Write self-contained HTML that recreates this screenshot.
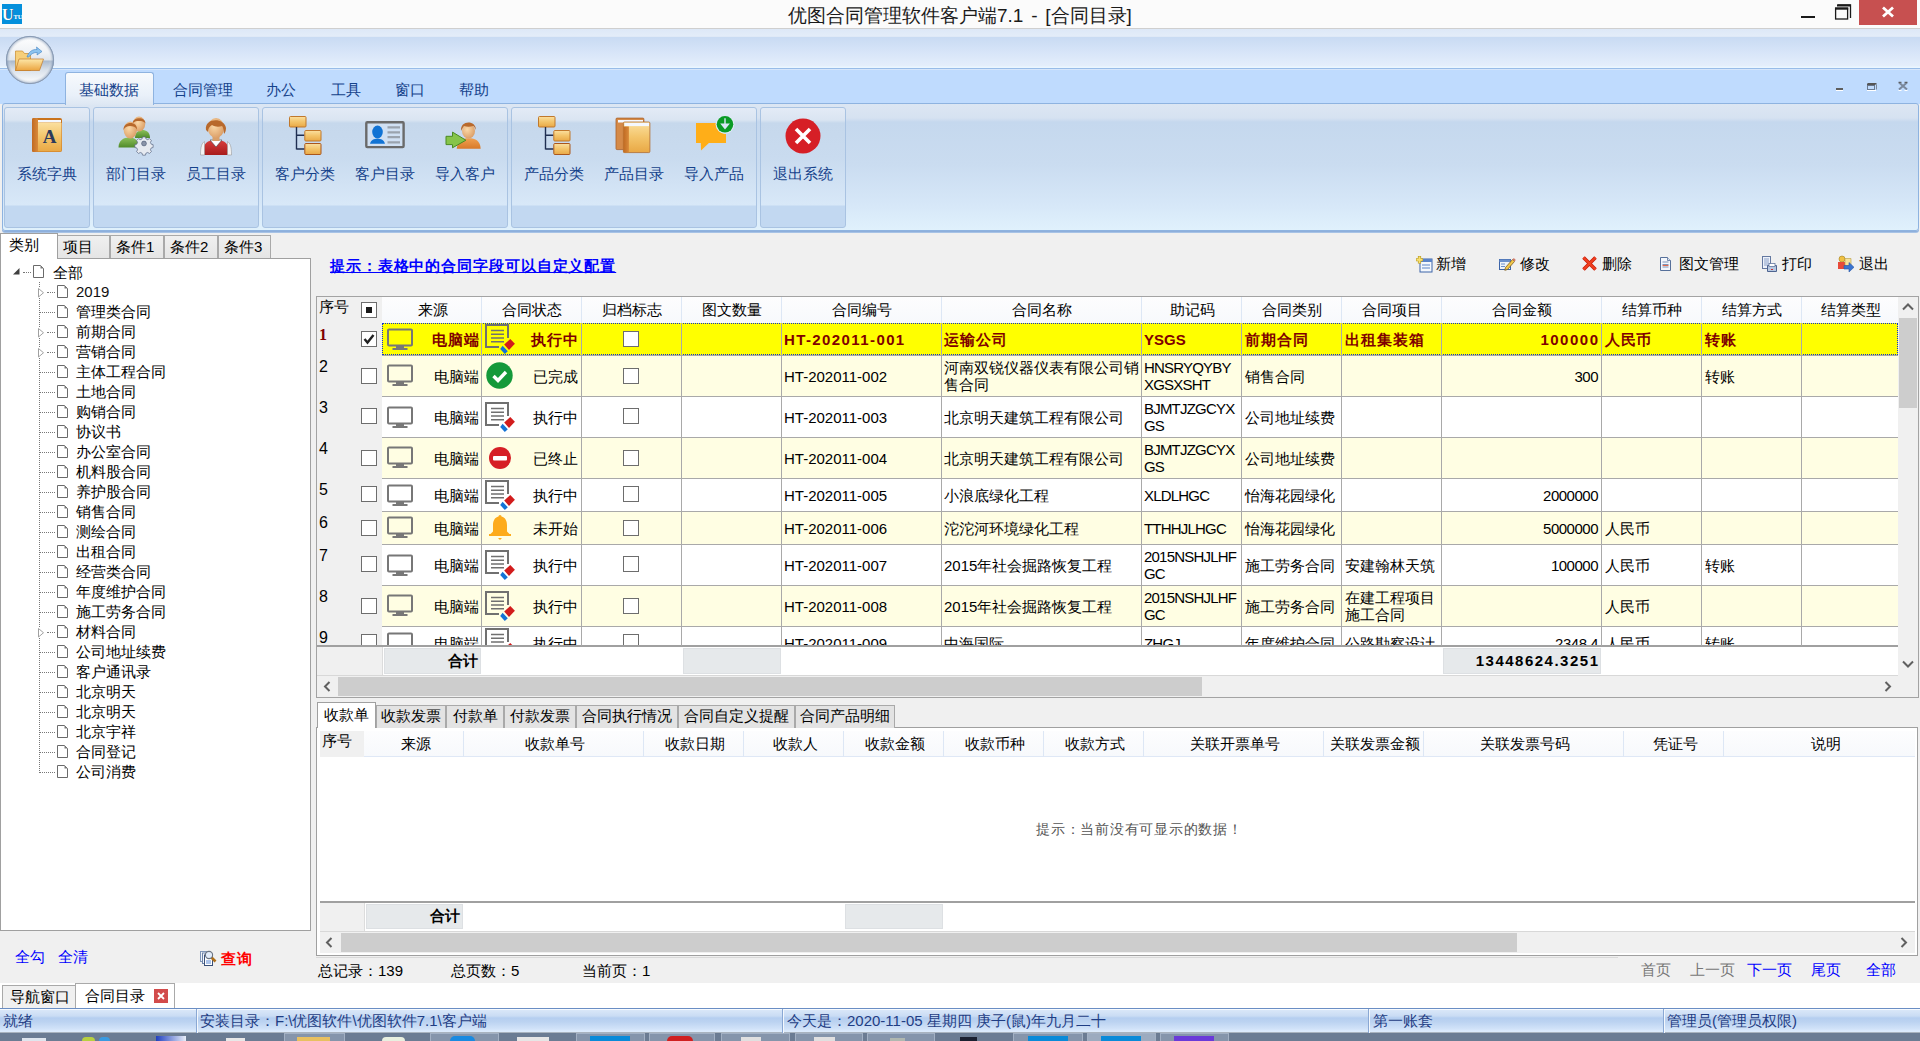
<!DOCTYPE html><html><head><meta charset="utf-8"><style>
*{margin:0;padding:0;box-sizing:border-box;}
html,body{width:1920px;height:1041px;overflow:hidden;}
body{position:relative;background:#f0f0f0;font-family:"Liberation Sans",sans-serif;}
body div,body svg{position:absolute;}
body div{white-space:nowrap;}
.grp{border:1px solid #a9c3e2;border-radius:3px;background:linear-gradient(#e3ebf6 0px,#dae5f2 12px,#c6d8ec 15px,#c9dbef 50px,#d8e8f8 97px,#c2d8f1 98px,#c2d8f1 120px);}
.rl{font-size:15px;line-height:18px;color:#15428b;text-align:center;width:80px;top:165px;}
</style></head><body><div style="left:0px;top:0px;width:1920px;height:29px;background:#fbfbfb;border-bottom:1px solid #cfcfcf;"></div>
<div style="left:2px;top:4px;width:20px;height:20px;background:#0590dc;"></div>
<svg style="left:2px;top:4px" width="20" height="20" viewBox="0 0 20 20"><text x="0.8" y="16.3" font-family="Liberation Serif" font-weight="bold" font-size="16" fill="#0a3050" fill-opacity="0.7">U</text><text x="0" y="15.5" font-family="Liberation Serif" font-weight="bold" font-size="16" fill="#fff">U</text><text x="11.5" y="14.5" font-family="Liberation Serif" font-weight="bold" font-size="6.5" fill="#fff">TU</text></svg>
<div style="left:788px;top:3px;font-size:19px;line-height:26px;height:26px;color:#1a1a1a;word-spacing:2.5px;">优图合同管理软件客户端7.1 - [合同目录]</div>
<div style="left:1801px;top:16px;width:14px;height:2px;background:#1a1a1a;"></div>
<svg style="left:1834px;top:3px" width="18" height="18" viewBox="0 0 18 18"><path d="M3.5 2h13v13" fill="none" stroke="#1a1a1a" stroke-width="1.3"/><rect x="3" y="1.5" width="13.5" height="2" fill="#1a1a1a"/><rect x="1.6" y="5.2" width="12" height="10.8" fill="#fbfbfb" stroke="#1a1a1a" stroke-width="1.3"/><rect x="1" y="4.5" width="13.2" height="2.2" fill="#1a1a1a"/></svg>
<div style="left:1859px;top:0px;width:58px;height:25px;background:#c75050;"></div>
<svg style="left:1881px;top:6px" width="14" height="12" viewBox="0 0 14 12"><path d="M2 1.5L12 10.5M12 1.5L2 10.5" stroke="#fff" stroke-width="2.8"/></svg>
<div style="left:0px;top:29px;width:1920px;height:40px;background:linear-gradient(#dde8f7 0px,#e3ecf9 7px,#dbe6f5 8px,#c9dbf3 8.5px,#d6e4f8 22px,#e4eefb 37px,#eaf6ff 38px,#eaf6ff 39px);border-bottom:1px solid #98bce8;"></div>
<div style="left:0px;top:69px;width:1920px;height:35px;background:linear-gradient(#d6e6fb 0px,#d6e6fb 1px,#bfdbfe 1.5px);"></div>
<div style="left:2px;top:103px;width:1917px;height:128px;border:1px solid #8eb3e0;border-radius:3px;background:linear-gradient(#dce6f3 0px,#d6e2f1 14px,#c5d8ee 18px,#cadcf0 60px,#d6e7f8 100px,#e0f1fc 126px);box-shadow:0 1px 0 #8eafdb,0 2px 0 #a7c3e6;"></div>
<div style="left:65px;top:72px;width:89px;height:33px;border:1px solid #8eb3e0;border-bottom:none;border-radius:3px 3px 0 0;background:linear-gradient(#f7fafd,#e9f0f9 70%,#dde7f3);"></div>
<div style="left:79px;top:80px;font-size:15px;line-height:20px;height:20px;color:#15428b;">基础数据</div>
<div style="left:173px;top:80px;font-size:15px;line-height:20px;height:20px;color:#15428b;">合同管理</div>
<div style="left:266px;top:80px;font-size:15px;line-height:20px;height:20px;color:#15428b;">办公</div>
<div style="left:331px;top:80px;font-size:15px;line-height:20px;height:20px;color:#15428b;">工具</div>
<div style="left:395px;top:80px;font-size:15px;line-height:20px;height:20px;color:#15428b;">窗口</div>
<div style="left:459px;top:80px;font-size:15px;line-height:20px;height:20px;color:#15428b;">帮助</div>
<svg style="left:1830px;top:80px" width="90" height="14" viewBox="0 0 90 14"><path d="M6 10.5h7" stroke="#fff" stroke-width="1"/><path d="M6 9h7" stroke="#5e5e5e" stroke-width="2"/><path d="M37.5 4.5h9v5" fill="none" stroke="#7a889a" stroke-width="1"/><path d="M37.5 3.5h9" stroke="#555" stroke-width="1"/><rect x="37.5" y="5.5" width="7" height="4" fill="none" stroke="#6a7a90" stroke-width="1"/><path d="M37 4.5h8" stroke="#555" stroke-width="1.3"/><path d="M37 10.5h9" stroke="#fff" stroke-width="1"/><path d="M69 2.5L77 9.5M77 2.5L69 9.5" stroke="#7a889c" stroke-width="2"/><path d="M68.5 2.3h3M74.5 2.3h3" stroke="#505050" stroke-width="1"/><path d="M68.5 10.5h3M74.5 10.5h3" stroke="#fff" stroke-width="1"/></svg>
<svg style="left:5px;top:35px" width="50" height="50" viewBox="0 0 50 50"><defs><radialGradient id="orbr" cx="50%" cy="50%" r="50%"><stop offset="0" stop-color="#ffffff" stop-opacity="0"/><stop offset="0.8" stop-color="#ffffff" stop-opacity="0"/><stop offset="0.92" stop-color="#8da0ba" stop-opacity="0.35"/><stop offset="1" stop-color="#7088a8" stop-opacity="0.8"/></radialGradient><linearGradient id="orbh" x1="0" y1="0" x2="0" y2="1"><stop offset="0" stop-color="#ffffff"/><stop offset="0.35" stop-color="#eef1f5"/><stop offset="0.5" stop-color="#dfe5ec"/><stop offset="0.52" stop-color="#a9b9cd"/><stop offset="0.7" stop-color="#d8e0ea"/><stop offset="1" stop-color="#ffffff"/></linearGradient><linearGradient id="fldf" x1="0" y1="0" x2="0" y2="1"><stop offset="0" stop-color="#fde7a8"/><stop offset="1" stop-color="#eba540"/></linearGradient></defs><circle cx="25" cy="25" r="24" fill="url(#orbh)"/><circle cx="25" cy="25" r="24" fill="url(#orbr)"/><circle cx="25" cy="25" r="23.6" fill="none" stroke="#8a9cb6" stroke-width="1"/><path d="M10.5 16h7l2 2.5h6v17H10.5z" fill="#f6cf7a" stroke="#c98a2b" stroke-width="0.7"/><path d="M14 24h24.5l-4 11.5H10.5z" fill="url(#fldf)" stroke="#c0782a" stroke-width="0.7"/><path d="M22 22c1.5-5 5.5-8 10-7.5l-0.5-2.5 5.5 4.5-5 3.5 0.3-2.5c-3.5-0.3-6.5 1.5-8.5 4.5z" fill="#8cc4f0" stroke="#3d7fc2" stroke-width="0.6"/></svg>
<div class="grp" style="left:4px;top:107px;width:86px;height:121px;"></div>
<div class="grp" style="left:93px;top:107px;width:166px;height:121px;"></div>
<div class="grp" style="left:262px;top:107px;width:246px;height:121px;"></div>
<div class="grp" style="left:511px;top:107px;width:246px;height:121px;"></div>
<div class="grp" style="left:760px;top:107px;width:86px;height:121px;"></div>
<svg style="left:25px;top:116px" width="44" height="40" viewBox="0 0 44 40"><defs><linearGradient id="gOr" x1="0" y1="0" x2="0" y2="1"><stop offset="0" stop-color="#fbe0a0"/><stop offset="0.5" stop-color="#f3c46a"/><stop offset="1" stop-color="#e9a845"/></linearGradient><linearGradient id="gSp" x1="0" y1="0" x2="1" y2="0"><stop offset="0" stop-color="#c06a22"/><stop offset="1" stop-color="#d98a3a"/></linearGradient><linearGradient id="gGr" x1="0" y1="0" x2="0" y2="1"><stop offset="0" stop-color="#8cc05a"/><stop offset="1" stop-color="#4f8a2a"/></linearGradient><radialGradient id="gSk" cx="0.4" cy="0.4" r="0.7"><stop offset="0" stop-color="#fbd9a8"/><stop offset="1" stop-color="#d89860"/></radialGradient><linearGradient id="gRd" x1="0" y1="0" x2="0" y2="1"><stop offset="0" stop-color="#d9403e"/><stop offset="1" stop-color="#a81c1c"/></linearGradient><linearGradient id="gOb" x1="0" y1="0" x2="0" y2="1"><stop offset="0" stop-color="#f0a050"/><stop offset="1" stop-color="#d87a2a"/></linearGradient></defs><g transform="translate(4 0)"><rect x="3" y="2" width="30" height="34" rx="2" fill="#c9731c"/><rect x="8" y="4" width="24" height="2.5" fill="#f4f8ff"/><rect x="8" y="6.5" width="24.5" height="29" rx="1" fill="url(#gOr)"/><rect x="3" y="2" width="6" height="34" rx="1.5" fill="url(#gSp)"/><text x="20.5" y="27" font-family="Liberation Serif" font-weight="bold" font-size="19" fill="#2b3a5c" text-anchor="middle">A</text></g></svg>
<div class="rl" style="left:7px;">系统字典</div>
<svg style="left:114px;top:116px" width="44" height="40" viewBox="0 0 44 40"><g transform="translate(4 0)"><path d="M17 22c0-6 4-8 7.5-8s7.5 2 7.5 8z" fill="url(#gGr)"/><ellipse cx="21" cy="8" rx="6.2" ry="7.5" fill="url(#gSk)"/><path d="M14.5 8c-0.5-7 13-8 13-0.5c-1.5-2-3.5-2.5-6.5-2.5s-5 0.5-6.5 3z" fill="#b8692c"/><path d="M0.5 31.5c0-7 5-10 10.5-10s10.5 3 10.5 10z" fill="url(#gGr)"/><ellipse cx="12.3" cy="14" rx="6.6" ry="8.6" fill="url(#gSk)"/><path d="M5.5 14c-0.5-9 14-9.5 13.5-0.5c-1.5-3-4-3.5-7-3.5s-5 1-6.5 4z" fill="#b8692c"/><g transform="translate(26 27.5) scale(0.8)"><path d="M-1.8-8.2h3.6l0.6 2.4 2.3 1 2.1-1.3 2.5 2.5-1.3 2.1 1 2.3 2.4 0.6v3.6l-2.4 0.6-1 2.3 1.3 2.1-2.5 2.5-2.1-1.3-2.3 1-0.6 2.4h-3.6l-0.6-2.4-2.3-1-2.1 1.3-2.5-2.5 1.3-2.1-1-2.3-2.4-0.6v-3.6l2.4-0.6 1-2.3-1.3-2.1 2.5-2.5 2.1 1.3 2.3-1z" fill="#e6eaf0" stroke="#5d6a85" stroke-width="0.9"/><circle r="3" fill="#8a94a8" stroke="#4d5a75" stroke-width="0.8"/></g></g></svg>
<div class="rl" style="left:96px;">部门目录</div>
<svg style="left:194px;top:116px" width="44" height="40" viewBox="0 0 44 40"><g transform="translate(4 0)"><path d="M4.5 39c0-12 5-15 13.5-15s13.5 3 13.5 15z" fill="url(#gRd)"/><path d="M2.5 39c0-9 1.5-12 4-13.5v13.5z M33.5 39c0-9-1.5-12-4-13.5v13.5z" fill="#f3f3f3" stroke="#9a9a9a" stroke-width="0.6"/><path d="M12 24l6 7 6-7z" fill="#fff" stroke="#444" stroke-width="0.6"/><rect x="14.5" y="19" width="7" height="6" fill="#d9a06a"/><ellipse cx="18" cy="12" rx="8.2" ry="10" fill="url(#gSk)"/><path d="M8 14c-2-12 18-13 20-2c0 3-1 5-2 6c0-4-1-7-2-8c-3 1-7 1-10-1c-2 1-4 3-4 7z" fill="#b8692c"/></g></svg>
<div class="rl" style="left:176px;">员工目录</div>
<svg style="left:283px;top:116px" width="44" height="40" viewBox="0 0 44 40"><g transform="translate(4 0)"><rect x="2.5" y="0.5" width="16.5" height="10.5" rx="1" fill="url(#gOr)" stroke="#c0782c"/><path d="M9.5 11v22.5M9.5 19.3h8M9.5 33h8" stroke="#1f2f52" stroke-width="1.4" fill="none"/><rect x="17.8" y="14.5" width="16.2" height="10.5" rx="1" fill="url(#gOr)" stroke="#c0782c"/><rect x="17.8" y="27.5" width="16.2" height="11" rx="1" fill="url(#gOr)" stroke="#a9561c"/></g></svg>
<div class="rl" style="left:265px;">客户分类</div>
<svg style="left:363px;top:116px" width="44" height="40" viewBox="0 0 44 40"><g transform="translate(0 0)"><rect x="3.3" y="6.3" width="37.3" height="24.8" rx="1" fill="#d0e0f3" stroke="#6a6a6a" stroke-width="2.4"/><ellipse cx="14.5" cy="16" rx="5.3" ry="6.5" fill="#1173d4"/><path d="M7 27.7c1-4 4-5 7.5-5s6.5 1 7.5 5z" fill="#1173d4"/><path d="M24.5 11.3h12.5M24.5 16.4h12.5M24.5 21.2h12.5M24.5 26.3h12.5" stroke="#9aa3ae" stroke-width="2.2"/></g></svg>
<div class="rl" style="left:345px;">客户目录</div>
<svg style="left:443px;top:116px" width="44" height="40" viewBox="0 0 44 40"><g transform="translate(0 0)"><path d="M13.7 32.7c1-8 5-10.5 12-10.5s11.5 2.5 12 10.5z" fill="url(#gOb)"/><ellipse cx="25.5" cy="15" rx="6.5" ry="7.5" fill="url(#gSk)"/><path d="M18 15c-1-11 15-11 15-1c-1-2-2-4-3-4c-3 1-6 1-9 0c-1 1-2 3-3 5z" fill="#b8692c"/><path d="M3 20.3h6.5v-4.2l13.4 8.1-13.4 7.6v-3.2H3z" fill="#86c44a" stroke="#4a8a22" stroke-width="1"/></g></svg>
<div class="rl" style="left:425px;">导入客户</div>
<svg style="left:532px;top:116px" width="44" height="40" viewBox="0 0 44 40"><g transform="translate(4 0)"><rect x="2.5" y="0.5" width="16.5" height="10.5" rx="1" fill="url(#gOr)" stroke="#c0782c"/><path d="M9.5 11v22.5M9.5 19.3h8M9.5 33h8" stroke="#1f2f52" stroke-width="1.4" fill="none"/><rect x="17.8" y="14.5" width="16.2" height="10.5" rx="1" fill="url(#gOr)" stroke="#c0782c"/><rect x="17.8" y="27.5" width="16.2" height="11" rx="1" fill="url(#gOr)" stroke="#a9561c"/></g></svg>
<div class="rl" style="left:514px;">产品分类</div>
<svg style="left:612px;top:116px" width="44" height="40" viewBox="0 0 44 40"><g transform="translate(0 0)"><rect x="4" y="2.1" width="27.9" height="31.5" rx="1" fill="#d58a48" stroke="#a9612a" stroke-width="0.8"/><rect x="6" y="4" width="25" height="2.5" fill="#f4f8ff"/><rect x="11.4" y="6" width="26.5" height="30.6" rx="1.2" fill="url(#gOr)" stroke="#b06a2e" stroke-width="0.8"/><rect x="12.5" y="6.9" width="24.5" height="3.2" fill="#f4f8ff"/><rect x="11.4" y="10.5" width="5.5" height="26" fill="url(#gSp)"/></g></svg>
<div class="rl" style="left:594px;">产品目录</div>
<svg style="left:692px;top:116px" width="44" height="40" viewBox="0 0 44 40"><g transform="translate(0 0)"><path d="M4 6.9h20c0.5 5 3 8 5 9.5c1.5 1 3 1.2 5 1.5v9.1H16.9L9 34.6 8.8 27H4z" fill="#ffae18"/><circle cx="33" cy="8.3" r="9.4" fill="#dfeaf6"/><circle cx="33" cy="8.3" r="8.3" fill="#0a9b25"/><path d="M32.3 2.3h1.4v5.1h4.2L33 13.4 28.2 7.4h4.1z" fill="#d8e6f6"/></g></svg>
<div class="rl" style="left:674px;">导入产品</div>
<svg style="left:781px;top:116px" width="44" height="40" viewBox="0 0 44 40"><g transform="translate(0 0)"><circle cx="22" cy="20" r="17.5" fill="#d61f26"/><path d="M15 13L29 27M29 13L15 27" stroke="#fff" stroke-width="3.6"/></g></svg>
<div class="rl" style="left:763px;">退出系统</div>
<div style="left:0px;top:233px;width:58px;height:26px;background:#fff;border:1px solid #a0a0a0;border-bottom:none;z-index:2;"></div>
<div style="left:9px;top:236px;font-size:15px;line-height:18px;height:18px;color:#000;z-index:3;">类别</div>
<div style="left:57px;top:235px;width:53px;height:24px;background:linear-gradient(#f0f0f0,#e4e4e4);border:1px solid #a9a9a9;border-bottom:none;"></div>
<div style="left:63px;top:238px;font-size:15px;line-height:18px;height:18px;color:#000;">项目</div>
<div style="left:110px;top:235px;width:54px;height:24px;background:linear-gradient(#f0f0f0,#e4e4e4);border:1px solid #a9a9a9;border-bottom:none;"></div>
<div style="left:116px;top:238px;font-size:15px;line-height:18px;height:18px;color:#000;">条件1</div>
<div style="left:164px;top:235px;width:54px;height:24px;background:linear-gradient(#f0f0f0,#e4e4e4);border:1px solid #a9a9a9;border-bottom:none;"></div>
<div style="left:170px;top:238px;font-size:15px;line-height:18px;height:18px;color:#000;">条件2</div>
<div style="left:218px;top:235px;width:53px;height:24px;background:linear-gradient(#f0f0f0,#e4e4e4);border:1px solid #a9a9a9;border-bottom:none;"></div>
<div style="left:224px;top:238px;font-size:15px;line-height:18px;height:18px;color:#000;">条件3</div>
<div style="left:0px;top:258px;width:311px;height:673px;background:#fff;border:1px solid #a0a0a0;"></div>
<svg style="left:13px;top:268px" width="7" height="7" viewBox="0 0 7 7"><path d="M6.5 0V6.5H0z" fill="#404040"/></svg>
<div style="left:23px;top:272px;width:8px;height:1px;border-top:1px dotted #777;"></div>
<svg style="left:33px;top:265px" width="12" height="14" viewBox="0 0 12 14"><path d="M0.5 0.5H7.5L10.5 3.5V12.5H0.5Z" fill="#fff" stroke="#6a6a6a"/><path d="M7.5 0.5L10.5 3.5H7.5Z" fill="#7a7a7a"/></svg>
<div style="left:53px;top:263.5px;font-size:15px;line-height:18px;height:18px;color:#000;">全部</div>
<div style="left:39px;top:282px;width:1px;height:491px;border-left:1px dotted #777;"></div>
<div style="left:38px;top:287px;width:6px;height:10px;background:#fff;"></div>
<svg style="left:38px;top:288px" width="6" height="10" viewBox="0 0 6 10"><path d="M0.5 0.5L5.5 4.75L0.5 9z" fill="#fff" stroke="#a0a0a0"/></svg>
<div style="left:47px;top:292px;width:8px;height:1px;border-top:1px dotted #777;"></div>
<svg style="left:57px;top:285px" width="12" height="14" viewBox="0 0 12 14"><path d="M0.5 0.5H7.5L10.5 3.5V12.5H0.5Z" fill="#fff" stroke="#6a6a6a"/><path d="M7.5 0.5L10.5 3.5H7.5Z" fill="#7a7a7a"/></svg>
<div style="left:76px;top:283px;font-size:15px;line-height:18px;height:18px;color:#111;">2019</div>
<div style="left:40px;top:312px;width:15px;height:1px;border-top:1px dotted #777;"></div>
<svg style="left:57px;top:305px" width="12" height="14" viewBox="0 0 12 14"><path d="M0.5 0.5H7.5L10.5 3.5V12.5H0.5Z" fill="#fff" stroke="#6a6a6a"/><path d="M7.5 0.5L10.5 3.5H7.5Z" fill="#7a7a7a"/></svg>
<div style="left:76px;top:303px;font-size:15px;line-height:18px;height:18px;color:#000;">管理类合同</div>
<div style="left:38px;top:327px;width:6px;height:10px;background:#fff;"></div>
<svg style="left:38px;top:328px" width="6" height="10" viewBox="0 0 6 10"><path d="M0.5 0.5L5.5 4.75L0.5 9z" fill="#fff" stroke="#a0a0a0"/></svg>
<div style="left:47px;top:332px;width:8px;height:1px;border-top:1px dotted #777;"></div>
<svg style="left:57px;top:325px" width="12" height="14" viewBox="0 0 12 14"><path d="M0.5 0.5H7.5L10.5 3.5V12.5H0.5Z" fill="#fff" stroke="#6a6a6a"/><path d="M7.5 0.5L10.5 3.5H7.5Z" fill="#7a7a7a"/></svg>
<div style="left:76px;top:323px;font-size:15px;line-height:18px;height:18px;color:#000;">前期合同</div>
<div style="left:38px;top:347px;width:6px;height:10px;background:#fff;"></div>
<svg style="left:38px;top:348px" width="6" height="10" viewBox="0 0 6 10"><path d="M0.5 0.5L5.5 4.75L0.5 9z" fill="#fff" stroke="#a0a0a0"/></svg>
<div style="left:47px;top:352px;width:8px;height:1px;border-top:1px dotted #777;"></div>
<svg style="left:57px;top:345px" width="12" height="14" viewBox="0 0 12 14"><path d="M0.5 0.5H7.5L10.5 3.5V12.5H0.5Z" fill="#fff" stroke="#6a6a6a"/><path d="M7.5 0.5L10.5 3.5H7.5Z" fill="#7a7a7a"/></svg>
<div style="left:76px;top:343px;font-size:15px;line-height:18px;height:18px;color:#000;">营销合同</div>
<div style="left:40px;top:372px;width:15px;height:1px;border-top:1px dotted #777;"></div>
<svg style="left:57px;top:365px" width="12" height="14" viewBox="0 0 12 14"><path d="M0.5 0.5H7.5L10.5 3.5V12.5H0.5Z" fill="#fff" stroke="#6a6a6a"/><path d="M7.5 0.5L10.5 3.5H7.5Z" fill="#7a7a7a"/></svg>
<div style="left:76px;top:363px;font-size:15px;line-height:18px;height:18px;color:#000;">主体工程合同</div>
<div style="left:40px;top:392px;width:15px;height:1px;border-top:1px dotted #777;"></div>
<svg style="left:57px;top:385px" width="12" height="14" viewBox="0 0 12 14"><path d="M0.5 0.5H7.5L10.5 3.5V12.5H0.5Z" fill="#fff" stroke="#6a6a6a"/><path d="M7.5 0.5L10.5 3.5H7.5Z" fill="#7a7a7a"/></svg>
<div style="left:76px;top:383px;font-size:15px;line-height:18px;height:18px;color:#000;">土地合同</div>
<div style="left:40px;top:412px;width:15px;height:1px;border-top:1px dotted #777;"></div>
<svg style="left:57px;top:405px" width="12" height="14" viewBox="0 0 12 14"><path d="M0.5 0.5H7.5L10.5 3.5V12.5H0.5Z" fill="#fff" stroke="#6a6a6a"/><path d="M7.5 0.5L10.5 3.5H7.5Z" fill="#7a7a7a"/></svg>
<div style="left:76px;top:403px;font-size:15px;line-height:18px;height:18px;color:#000;">购销合同</div>
<div style="left:40px;top:432px;width:15px;height:1px;border-top:1px dotted #777;"></div>
<svg style="left:57px;top:425px" width="12" height="14" viewBox="0 0 12 14"><path d="M0.5 0.5H7.5L10.5 3.5V12.5H0.5Z" fill="#fff" stroke="#6a6a6a"/><path d="M7.5 0.5L10.5 3.5H7.5Z" fill="#7a7a7a"/></svg>
<div style="left:76px;top:423px;font-size:15px;line-height:18px;height:18px;color:#000;">协议书</div>
<div style="left:40px;top:452px;width:15px;height:1px;border-top:1px dotted #777;"></div>
<svg style="left:57px;top:445px" width="12" height="14" viewBox="0 0 12 14"><path d="M0.5 0.5H7.5L10.5 3.5V12.5H0.5Z" fill="#fff" stroke="#6a6a6a"/><path d="M7.5 0.5L10.5 3.5H7.5Z" fill="#7a7a7a"/></svg>
<div style="left:76px;top:443px;font-size:15px;line-height:18px;height:18px;color:#000;">办公室合同</div>
<div style="left:40px;top:472px;width:15px;height:1px;border-top:1px dotted #777;"></div>
<svg style="left:57px;top:465px" width="12" height="14" viewBox="0 0 12 14"><path d="M0.5 0.5H7.5L10.5 3.5V12.5H0.5Z" fill="#fff" stroke="#6a6a6a"/><path d="M7.5 0.5L10.5 3.5H7.5Z" fill="#7a7a7a"/></svg>
<div style="left:76px;top:463px;font-size:15px;line-height:18px;height:18px;color:#000;">机料股合同</div>
<div style="left:40px;top:492px;width:15px;height:1px;border-top:1px dotted #777;"></div>
<svg style="left:57px;top:485px" width="12" height="14" viewBox="0 0 12 14"><path d="M0.5 0.5H7.5L10.5 3.5V12.5H0.5Z" fill="#fff" stroke="#6a6a6a"/><path d="M7.5 0.5L10.5 3.5H7.5Z" fill="#7a7a7a"/></svg>
<div style="left:76px;top:483px;font-size:15px;line-height:18px;height:18px;color:#000;">养护股合同</div>
<div style="left:40px;top:512px;width:15px;height:1px;border-top:1px dotted #777;"></div>
<svg style="left:57px;top:505px" width="12" height="14" viewBox="0 0 12 14"><path d="M0.5 0.5H7.5L10.5 3.5V12.5H0.5Z" fill="#fff" stroke="#6a6a6a"/><path d="M7.5 0.5L10.5 3.5H7.5Z" fill="#7a7a7a"/></svg>
<div style="left:76px;top:503px;font-size:15px;line-height:18px;height:18px;color:#000;">销售合同</div>
<div style="left:40px;top:532px;width:15px;height:1px;border-top:1px dotted #777;"></div>
<svg style="left:57px;top:525px" width="12" height="14" viewBox="0 0 12 14"><path d="M0.5 0.5H7.5L10.5 3.5V12.5H0.5Z" fill="#fff" stroke="#6a6a6a"/><path d="M7.5 0.5L10.5 3.5H7.5Z" fill="#7a7a7a"/></svg>
<div style="left:76px;top:523px;font-size:15px;line-height:18px;height:18px;color:#000;">测绘合同</div>
<div style="left:40px;top:552px;width:15px;height:1px;border-top:1px dotted #777;"></div>
<svg style="left:57px;top:545px" width="12" height="14" viewBox="0 0 12 14"><path d="M0.5 0.5H7.5L10.5 3.5V12.5H0.5Z" fill="#fff" stroke="#6a6a6a"/><path d="M7.5 0.5L10.5 3.5H7.5Z" fill="#7a7a7a"/></svg>
<div style="left:76px;top:543px;font-size:15px;line-height:18px;height:18px;color:#000;">出租合同</div>
<div style="left:40px;top:572px;width:15px;height:1px;border-top:1px dotted #777;"></div>
<svg style="left:57px;top:565px" width="12" height="14" viewBox="0 0 12 14"><path d="M0.5 0.5H7.5L10.5 3.5V12.5H0.5Z" fill="#fff" stroke="#6a6a6a"/><path d="M7.5 0.5L10.5 3.5H7.5Z" fill="#7a7a7a"/></svg>
<div style="left:76px;top:563px;font-size:15px;line-height:18px;height:18px;color:#000;">经营类合同</div>
<div style="left:40px;top:592px;width:15px;height:1px;border-top:1px dotted #777;"></div>
<svg style="left:57px;top:585px" width="12" height="14" viewBox="0 0 12 14"><path d="M0.5 0.5H7.5L10.5 3.5V12.5H0.5Z" fill="#fff" stroke="#6a6a6a"/><path d="M7.5 0.5L10.5 3.5H7.5Z" fill="#7a7a7a"/></svg>
<div style="left:76px;top:583px;font-size:15px;line-height:18px;height:18px;color:#000;">年度维护合同</div>
<div style="left:40px;top:612px;width:15px;height:1px;border-top:1px dotted #777;"></div>
<svg style="left:57px;top:605px" width="12" height="14" viewBox="0 0 12 14"><path d="M0.5 0.5H7.5L10.5 3.5V12.5H0.5Z" fill="#fff" stroke="#6a6a6a"/><path d="M7.5 0.5L10.5 3.5H7.5Z" fill="#7a7a7a"/></svg>
<div style="left:76px;top:603px;font-size:15px;line-height:18px;height:18px;color:#000;">施工劳务合同</div>
<div style="left:38px;top:627px;width:6px;height:10px;background:#fff;"></div>
<svg style="left:38px;top:628px" width="6" height="10" viewBox="0 0 6 10"><path d="M0.5 0.5L5.5 4.75L0.5 9z" fill="#fff" stroke="#a0a0a0"/></svg>
<div style="left:47px;top:632px;width:8px;height:1px;border-top:1px dotted #777;"></div>
<svg style="left:57px;top:625px" width="12" height="14" viewBox="0 0 12 14"><path d="M0.5 0.5H7.5L10.5 3.5V12.5H0.5Z" fill="#fff" stroke="#6a6a6a"/><path d="M7.5 0.5L10.5 3.5H7.5Z" fill="#7a7a7a"/></svg>
<div style="left:76px;top:623px;font-size:15px;line-height:18px;height:18px;color:#000;">材料合同</div>
<div style="left:40px;top:652px;width:15px;height:1px;border-top:1px dotted #777;"></div>
<svg style="left:57px;top:645px" width="12" height="14" viewBox="0 0 12 14"><path d="M0.5 0.5H7.5L10.5 3.5V12.5H0.5Z" fill="#fff" stroke="#6a6a6a"/><path d="M7.5 0.5L10.5 3.5H7.5Z" fill="#7a7a7a"/></svg>
<div style="left:76px;top:643px;font-size:15px;line-height:18px;height:18px;color:#000;">公司地址续费</div>
<div style="left:40px;top:672px;width:15px;height:1px;border-top:1px dotted #777;"></div>
<svg style="left:57px;top:665px" width="12" height="14" viewBox="0 0 12 14"><path d="M0.5 0.5H7.5L10.5 3.5V12.5H0.5Z" fill="#fff" stroke="#6a6a6a"/><path d="M7.5 0.5L10.5 3.5H7.5Z" fill="#7a7a7a"/></svg>
<div style="left:76px;top:663px;font-size:15px;line-height:18px;height:18px;color:#000;">客户通讯录</div>
<div style="left:40px;top:692px;width:15px;height:1px;border-top:1px dotted #777;"></div>
<svg style="left:57px;top:685px" width="12" height="14" viewBox="0 0 12 14"><path d="M0.5 0.5H7.5L10.5 3.5V12.5H0.5Z" fill="#fff" stroke="#6a6a6a"/><path d="M7.5 0.5L10.5 3.5H7.5Z" fill="#7a7a7a"/></svg>
<div style="left:76px;top:683px;font-size:15px;line-height:18px;height:18px;color:#000;">北京明天</div>
<div style="left:40px;top:712px;width:15px;height:1px;border-top:1px dotted #777;"></div>
<svg style="left:57px;top:705px" width="12" height="14" viewBox="0 0 12 14"><path d="M0.5 0.5H7.5L10.5 3.5V12.5H0.5Z" fill="#fff" stroke="#6a6a6a"/><path d="M7.5 0.5L10.5 3.5H7.5Z" fill="#7a7a7a"/></svg>
<div style="left:76px;top:703px;font-size:15px;line-height:18px;height:18px;color:#000;">北京明天</div>
<div style="left:40px;top:732px;width:15px;height:1px;border-top:1px dotted #777;"></div>
<svg style="left:57px;top:725px" width="12" height="14" viewBox="0 0 12 14"><path d="M0.5 0.5H7.5L10.5 3.5V12.5H0.5Z" fill="#fff" stroke="#6a6a6a"/><path d="M7.5 0.5L10.5 3.5H7.5Z" fill="#7a7a7a"/></svg>
<div style="left:76px;top:723px;font-size:15px;line-height:18px;height:18px;color:#000;">北京宇祥</div>
<div style="left:40px;top:752px;width:15px;height:1px;border-top:1px dotted #777;"></div>
<svg style="left:57px;top:745px" width="12" height="14" viewBox="0 0 12 14"><path d="M0.5 0.5H7.5L10.5 3.5V12.5H0.5Z" fill="#fff" stroke="#6a6a6a"/><path d="M7.5 0.5L10.5 3.5H7.5Z" fill="#7a7a7a"/></svg>
<div style="left:76px;top:743px;font-size:15px;line-height:18px;height:18px;color:#000;">合同登记</div>
<div style="left:40px;top:772px;width:15px;height:1px;border-top:1px dotted #777;"></div>
<svg style="left:57px;top:765px" width="12" height="14" viewBox="0 0 12 14"><path d="M0.5 0.5H7.5L10.5 3.5V12.5H0.5Z" fill="#fff" stroke="#6a6a6a"/><path d="M7.5 0.5L10.5 3.5H7.5Z" fill="#7a7a7a"/></svg>
<div style="left:76px;top:763px;font-size:15px;line-height:18px;height:18px;color:#000;">公司消费</div>
<div style="left:15px;top:948px;font-size:15px;line-height:18px;height:18px;color:#0000ff;">全勾</div>
<div style="left:58px;top:948px;font-size:15px;line-height:18px;height:18px;color:#0000ff;">全清</div>
<svg style="left:199px;top:950px" width="18" height="17" viewBox="0 0 18 17"><rect x="1.5" y="1.5" width="6" height="10" fill="#f0f4fa" stroke="#8096b8"/><rect x="3.5" y="3" width="6" height="10.5" fill="#f4f7fc" stroke="#6d84aa"/><rect x="5.5" y="5" width="8" height="10.5" fill="#fff" stroke="#3a5078"/><path d="M7 11h5M7 13h5" stroke="#5a8ad8" stroke-width="1"/><path d="M12.5 7.5L16.5 11.5" stroke="#b0701a" stroke-width="2.6"/><circle cx="10" cy="5" r="3.6" fill="#e2ecfa" stroke="#6a7380" stroke-width="1.1"/></svg>
<div style="left:221px;top:949.5px;font-size:15px;line-height:18px;height:18px;color:#ff0000;font-weight:bold;letter-spacing:1px;">查询</div>
<div style="left:330px;top:257px;font-size:15px;line-height:18px;height:20px;color:#0000ff;font-weight:bold;text-decoration:underline;letter-spacing:0.9px;">提示：表格中的合同字段可以自定义配置</div>
<svg style="left:1415px;top:255px" width="18" height="18" viewBox="0 0 18 18"><rect x="5" y="4" width="12" height="13" fill="#f4f8fd" stroke="#3c64a8"/><rect x="5" y="4" width="12" height="3" fill="#5b84c8"/><path d="M7 10h8M7 13h8" stroke="#5b84c8" stroke-width="1.2"/><path d="M4.5 1v7.5M1 4.75h7" stroke="#b89a20" stroke-width="3.2"/><path d="M4.5 1.5v6.5M1.5 4.75h6" stroke="#f8e070" stroke-width="1.8"/></svg>
<div style="left:1436px;top:255px;font-size:15px;line-height:18px;height:18px;color:#000;">新增</div>
<svg style="left:1498px;top:255px" width="18" height="18" viewBox="0 0 18 18"><rect x="1.5" y="4.5" width="11" height="10" fill="#eef3fa" stroke="#3c64a8"/><rect x="1.5" y="4.5" width="11" height="2.5" fill="#6a90cc"/><path d="M3 9h4M3 11.5h4" stroke="#6a90cc"/><path d="M7.5 12.5l7-8 2 2-7 8-2.7 0.8z" fill="#f2c84a" stroke="#7a5a20" stroke-width="0.8"/><path d="M14.5 4.5l1.3-1.5 2 2-1.3 1.5z" fill="#d07a6a"/></svg>
<div style="left:1520px;top:255px;font-size:15px;line-height:18px;height:18px;color:#000;">修改</div>
<svg style="left:1581px;top:255px" width="18" height="18" viewBox="0 0 18 18"><path d="M2.5 2.5L14.5 14.5M14.5 2.5L2.5 14.5" stroke="#c81e0a" stroke-width="3.6"/><path d="M2.5 2.5L14.5 14.5M14.5 2.5L2.5 14.5" stroke="#f04020" stroke-width="2"/></svg>
<div style="left:1602px;top:255px;font-size:15px;line-height:18px;height:18px;color:#000;">删除</div>
<svg style="left:1659px;top:255px" width="18" height="18" viewBox="0 0 18 18"><path d="M1.5 2.5h7l3 3v10h-10z" fill="#f4f7fc" stroke="#56709a"/><path d="M8.5 2.5v3h3" fill="#dde6f2" stroke="#56709a" stroke-width="0.8"/><path d="M3.5 7h6M3.5 9.5h6M3.5 12h6" stroke="#7d93b8" stroke-width="1"/><path d="M3.5 10.5h6" stroke="#e05a3a" stroke-width="0.9"/></svg>
<div style="left:1679px;top:255px;font-size:15px;line-height:18px;height:18px;color:#000;">图文管理</div>
<svg style="left:1761px;top:255px" width="18" height="18" viewBox="0 0 18 18"><rect x="1.5" y="1.5" width="8" height="12" fill="#eef2fa" stroke="#6478a0"/><path d="M3 4h5M3 6h5M3 8h5M3 10h5" stroke="#8aa0c8" stroke-width="1"/><path d="M6.5 10.5h9v6h-9z" fill="#b8c8e0" stroke="#4e6490"/><rect x="8" y="8.5" width="6" height="3" fill="#fff" stroke="#6478a0" stroke-width="0.8"/><rect x="10" y="14" width="2" height="1" fill="#d03030"/></svg>
<div style="left:1782px;top:255px;font-size:15px;line-height:18px;height:18px;color:#000;">打印</div>
<svg style="left:1837px;top:255px" width="18" height="18" viewBox="0 0 18 18"><circle cx="5" cy="4" r="3" fill="#f0c040" stroke="#a08020" stroke-width="0.6"/><rect x="1" y="7" width="8" height="7" fill="#e84a3a"/><path d="M8 3.5h6v7H8z" fill="#f6e29a" stroke="#b89a40" stroke-width="0.6"/><path d="M7 10.5h5v-3l5 4.75-5 4.75v-3H7z" fill="#3a74d0" stroke="#2a58a8" stroke-width="0.6"/></svg>
<div style="left:1859px;top:255px;font-size:15px;line-height:18px;height:18px;color:#000;">退出</div>
<div style="left:316px;top:296px;width:1603px;height:402px;background:#fff;border:1px solid #a3a3a3;"></div>
<div style="left:317px;top:297px;width:65px;height:349px;background:#f0f0f0;"></div>
<div style="left:382px;top:297px;width:1516px;height:26px;background:linear-gradient(#fdfdfe,#f7f9fc);"></div>
<div style="left:383px;top:301px;font-size:15px;line-height:18px;height:18px;color:#000;width:99px;text-align:center;">来源</div>
<div style="left:481px;top:297px;width:1px;height:26px;background:#dde7f5;"></div>
<div style="left:482px;top:301px;font-size:15px;line-height:18px;height:18px;color:#000;width:100px;text-align:center;">合同状态</div>
<div style="left:581px;top:297px;width:1px;height:26px;background:#dde7f5;"></div>
<div style="left:582px;top:301px;font-size:15px;line-height:18px;height:18px;color:#000;width:100px;text-align:center;">归档标志</div>
<div style="left:681px;top:297px;width:1px;height:26px;background:#dde7f5;"></div>
<div style="left:682px;top:301px;font-size:15px;line-height:18px;height:18px;color:#000;width:100px;text-align:center;">图文数量</div>
<div style="left:781px;top:297px;width:1px;height:26px;background:#dde7f5;"></div>
<div style="left:782px;top:301px;font-size:15px;line-height:18px;height:18px;color:#000;width:160px;text-align:center;">合同编号</div>
<div style="left:941px;top:297px;width:1px;height:26px;background:#dde7f5;"></div>
<div style="left:942px;top:301px;font-size:15px;line-height:18px;height:18px;color:#000;width:200px;text-align:center;">合同名称</div>
<div style="left:1141px;top:297px;width:1px;height:26px;background:#dde7f5;"></div>
<div style="left:1142px;top:301px;font-size:15px;line-height:18px;height:18px;color:#000;width:100px;text-align:center;">助记码</div>
<div style="left:1241px;top:297px;width:1px;height:26px;background:#dde7f5;"></div>
<div style="left:1242px;top:301px;font-size:15px;line-height:18px;height:18px;color:#000;width:100px;text-align:center;">合同类别</div>
<div style="left:1341px;top:297px;width:1px;height:26px;background:#dde7f5;"></div>
<div style="left:1342px;top:301px;font-size:15px;line-height:18px;height:18px;color:#000;width:100px;text-align:center;">合同项目</div>
<div style="left:1441px;top:297px;width:1px;height:26px;background:#dde7f5;"></div>
<div style="left:1442px;top:301px;font-size:15px;line-height:18px;height:18px;color:#000;width:160px;text-align:center;">合同金额</div>
<div style="left:1601px;top:297px;width:1px;height:26px;background:#dde7f5;"></div>
<div style="left:1602px;top:301px;font-size:15px;line-height:18px;height:18px;color:#000;width:100px;text-align:center;">结算币种</div>
<div style="left:1701px;top:297px;width:1px;height:26px;background:#dde7f5;"></div>
<div style="left:1702px;top:301px;font-size:15px;line-height:18px;height:18px;color:#000;width:100px;text-align:center;">结算方式</div>
<div style="left:1801px;top:297px;width:1px;height:26px;background:#dde7f5;"></div>
<div style="left:1802px;top:301px;font-size:15px;line-height:18px;height:18px;color:#000;width:97px;text-align:center;">结算类型</div>
<div style="left:319px;top:298px;font-size:15px;line-height:18px;height:18px;color:#000;">序号</div>
<div style="left:361px;top:302px;width:16px;height:16px;background:#fff;border:1px solid #6d6d6d;"></div>
<div style="left:366px;top:307px;width:6px;height:6px;background:#1a1a1a;"></div>
<div style="left:382px;top:323px;width:1516px;height:32px;background:#ffff00;overflow:hidden;"></div>
<div style="left:382px;top:355px;width:1516px;height:1px;background:#a9a9a9;z-index:1;"></div>
<div style="left:481px;top:323px;width:1px;height:33px;background:#a9a9a9;z-index:1;"></div>
<div style="left:581px;top:323px;width:1px;height:33px;background:#a9a9a9;z-index:1;"></div>
<div style="left:681px;top:323px;width:1px;height:33px;background:#a9a9a9;z-index:1;"></div>
<div style="left:781px;top:323px;width:1px;height:33px;background:#a9a9a9;z-index:1;"></div>
<div style="left:941px;top:323px;width:1px;height:33px;background:#a9a9a9;z-index:1;"></div>
<div style="left:1141px;top:323px;width:1px;height:33px;background:#a9a9a9;z-index:1;"></div>
<div style="left:1241px;top:323px;width:1px;height:33px;background:#a9a9a9;z-index:1;"></div>
<div style="left:1341px;top:323px;width:1px;height:33px;background:#a9a9a9;z-index:1;"></div>
<div style="left:1441px;top:323px;width:1px;height:33px;background:#a9a9a9;z-index:1;"></div>
<div style="left:1601px;top:323px;width:1px;height:33px;background:#a9a9a9;z-index:1;"></div>
<div style="left:1701px;top:323px;width:1px;height:33px;background:#a9a9a9;z-index:1;"></div>
<div style="left:1801px;top:323px;width:1px;height:33px;background:#a9a9a9;z-index:1;"></div>
<div style="left:319px;top:325px;font-size:16px;line-height:20px;color:#800000;font-family:'Liberation Serif',serif;font-weight:bold;">1</div>
<div style="left:361px;top:331px;width:16px;height:16px;background:#fff;border:1px solid #6d6d6d;"></div>
<svg style="left:363px;top:333px" width="12" height="12" viewBox="0 0 12 12"><path d="M1.5 6l3 3.5 6-7.5" stroke="#222" stroke-width="2.4" fill="none"/></svg>
<svg style="left:387px;top:328px" width="26" height="23" viewBox="0 0 26 23"><path d="M2 1.5h22a1 1 0 0 1 1 1v14a1 1 0 0 1-1 1H2a1 1 0 0 1-1-1v-14a1 1 0 0 1 1-1z" fill="#ffff00" stroke="#777" stroke-width="2"/><rect x="9" y="17" width="8" height="4" fill="#777"/><rect x="5.5" y="20" width="15" height="2" fill="#777"/></svg>
<div style="left:382px;top:331.0px;width:98.0px;font-size:15px;line-height:17px;color:#7f0000;text-align:right;font-weight:bold;letter-spacing:1.0px;">电脑端</div>
<svg style="left:485px;top:324px" width="31" height="31" viewBox="0 0 31 31"><path d="M23 14V1H1V23H14" fill="none" stroke="#707070" stroke-width="2"/><path d="M6 6.5h13M6 10.2h13M6 14h13M6 17.7h13" stroke="#707070" stroke-width="1.5"/><path d="M19.2 20.6L25.3 15 29.9 19.8 24 25.9z" fill="#d21c1c"/><path d="M15.2 24.9L17.6 21.8 22.8 27.3 19.8 29.9z" fill="#1473d6"/></svg>
<div style="left:481px;top:331.0px;width:98.0px;font-size:15px;line-height:17px;color:#7f0000;text-align:right;font-weight:bold;letter-spacing:1.0px;">执行中</div>
<div style="left:623px;top:331px;width:16px;height:16px;background:#fff;border:1px solid #6d6d6d;"></div>
<div style="left:784px;top:331.0px;width:154px;font-size:15px;line-height:17px;color:#7f0000;text-align:left;font-weight:bold;letter-spacing:1.4px;">HT-202011-001</div>
<div style="left:944px;top:331.0px;width:194px;font-size:15px;line-height:17px;color:#7f0000;text-align:left;font-weight:bold;letter-spacing:1.0px;">运输公司</div>
<div style="left:1144px;top:331.0px;width:94px;font-size:15px;line-height:17px;color:#7f0000;text-align:left;font-weight:bold;letter-spacing:0px;">YSGS</div>
<div style="left:1245px;top:331.0px;width:92px;font-size:15px;line-height:17px;color:#7f0000;text-align:left;font-weight:bold;letter-spacing:1.0px;">前期合同</div>
<div style="left:1345px;top:331.0px;width:92px;font-size:15px;line-height:17px;color:#7f0000;text-align:left;font-weight:bold;letter-spacing:1.0px;">出租集装箱</div>
<div style="left:1441px;top:331.0px;width:158.5px;font-size:15px;line-height:17px;color:#7f0000;text-align:right;font-weight:bold;letter-spacing:1.5px;">100000</div>
<div style="left:1605px;top:331.0px;width:92px;font-size:15px;line-height:17px;color:#7f0000;text-align:left;font-weight:bold;letter-spacing:0.7px;">人民币</div>
<div style="left:1705px;top:331.0px;width:92px;font-size:15px;line-height:17px;color:#7f0000;text-align:left;font-weight:bold;letter-spacing:0.7px;">转账</div>
<div style="left:382px;top:323px;width:1516px;height:32px;border:1px dotted #1030d0;"></div>
<div style="left:382px;top:355px;width:1516px;height:41px;background:#fffee3;overflow:hidden;"></div>
<div style="left:382px;top:396px;width:1516px;height:1px;background:#a9a9a9;z-index:1;"></div>
<div style="left:481px;top:355px;width:1px;height:42px;background:#a9a9a9;z-index:1;"></div>
<div style="left:581px;top:355px;width:1px;height:42px;background:#a9a9a9;z-index:1;"></div>
<div style="left:681px;top:355px;width:1px;height:42px;background:#a9a9a9;z-index:1;"></div>
<div style="left:781px;top:355px;width:1px;height:42px;background:#a9a9a9;z-index:1;"></div>
<div style="left:941px;top:355px;width:1px;height:42px;background:#a9a9a9;z-index:1;"></div>
<div style="left:1141px;top:355px;width:1px;height:42px;background:#a9a9a9;z-index:1;"></div>
<div style="left:1241px;top:355px;width:1px;height:42px;background:#a9a9a9;z-index:1;"></div>
<div style="left:1341px;top:355px;width:1px;height:42px;background:#a9a9a9;z-index:1;"></div>
<div style="left:1441px;top:355px;width:1px;height:42px;background:#a9a9a9;z-index:1;"></div>
<div style="left:1601px;top:355px;width:1px;height:42px;background:#a9a9a9;z-index:1;"></div>
<div style="left:1701px;top:355px;width:1px;height:42px;background:#a9a9a9;z-index:1;"></div>
<div style="left:1801px;top:355px;width:1px;height:42px;background:#a9a9a9;z-index:1;"></div>
<div style="left:319px;top:357px;font-size:16px;line-height:20px;color:#000;">2</div>
<div style="left:361px;top:368px;width:16px;height:16px;background:#fff;border:1px solid #6d6d6d;"></div>
<svg style="left:387px;top:364px" width="26" height="23" viewBox="0 0 26 23"><path d="M2 1.5h22a1 1 0 0 1 1 1v14a1 1 0 0 1-1 1H2a1 1 0 0 1-1-1v-14a1 1 0 0 1 1-1z" fill="#fffee3" stroke="#777" stroke-width="2"/><rect x="9" y="17" width="8" height="4" fill="#777"/><rect x="5.5" y="20" width="15" height="2" fill="#777"/></svg>
<div style="left:382px;top:367.5px;width:97px;font-size:15px;line-height:17px;color:#000;text-align:right;">电脑端</div>
<svg style="left:486px;top:362.0px" width="27" height="27" viewBox="0 0 27 27"><circle cx="13.5" cy="13.5" r="13.2" fill="#14993a"/><path d="M7.5 14l4.5 4.5 8-8.5" stroke="#fff" stroke-width="3.4" fill="none"/></svg>
<div style="left:481px;top:367.5px;width:97px;font-size:15px;line-height:17px;color:#000;text-align:right;">已完成</div>
<div style="left:623px;top:368px;width:16px;height:16px;background:#fff;border:1px solid #6d6d6d;"></div>
<div style="left:784px;top:367.5px;width:154px;font-size:15px;line-height:17px;color:#000;text-align:left;">HT-202011-002</div>
<div style="left:944px;top:359.0px;width:194px;font-size:15px;line-height:17px;color:#000;text-align:left;">河南双锐仪器仪表有限公司销<br>售合同</div>
<div style="left:1144px;top:359.0px;width:94px;font-size:15px;line-height:17px;color:#000;text-align:left;letter-spacing:-0.8px;">HNSRYQYBY<br>XGSXSHT</div>
<div style="left:1245px;top:367.5px;width:92px;font-size:15px;line-height:17px;color:#000;text-align:left;">销售合同</div>
<div style="left:1345px;top:367.5px;width:92px;font-size:15px;line-height:17px;color:#000;text-align:left;"></div>
<div style="left:1441px;top:367.5px;width:157px;font-size:15px;line-height:17px;color:#000;text-align:right;letter-spacing:-0.5px;">300</div>
<div style="left:1605px;top:367.5px;width:92px;font-size:15px;line-height:17px;color:#000;text-align:left;"></div>
<div style="left:1705px;top:367.5px;width:92px;font-size:15px;line-height:17px;color:#000;text-align:left;">转账</div>
<div style="left:382px;top:396px;width:1516px;height:41px;background:#ffffff;overflow:hidden;"></div>
<div style="left:382px;top:437px;width:1516px;height:1px;background:#a9a9a9;z-index:1;"></div>
<div style="left:481px;top:396px;width:1px;height:42px;background:#a9a9a9;z-index:1;"></div>
<div style="left:581px;top:396px;width:1px;height:42px;background:#a9a9a9;z-index:1;"></div>
<div style="left:681px;top:396px;width:1px;height:42px;background:#a9a9a9;z-index:1;"></div>
<div style="left:781px;top:396px;width:1px;height:42px;background:#a9a9a9;z-index:1;"></div>
<div style="left:941px;top:396px;width:1px;height:42px;background:#a9a9a9;z-index:1;"></div>
<div style="left:1141px;top:396px;width:1px;height:42px;background:#a9a9a9;z-index:1;"></div>
<div style="left:1241px;top:396px;width:1px;height:42px;background:#a9a9a9;z-index:1;"></div>
<div style="left:1341px;top:396px;width:1px;height:42px;background:#a9a9a9;z-index:1;"></div>
<div style="left:1441px;top:396px;width:1px;height:42px;background:#a9a9a9;z-index:1;"></div>
<div style="left:1601px;top:396px;width:1px;height:42px;background:#a9a9a9;z-index:1;"></div>
<div style="left:1701px;top:396px;width:1px;height:42px;background:#a9a9a9;z-index:1;"></div>
<div style="left:1801px;top:396px;width:1px;height:42px;background:#a9a9a9;z-index:1;"></div>
<div style="left:319px;top:398px;font-size:16px;line-height:20px;color:#000;">3</div>
<div style="left:361px;top:408px;width:16px;height:16px;background:#fff;border:1px solid #6d6d6d;"></div>
<svg style="left:387px;top:406px" width="26" height="23" viewBox="0 0 26 23"><path d="M2 1.5h22a1 1 0 0 1 1 1v14a1 1 0 0 1-1 1H2a1 1 0 0 1-1-1v-14a1 1 0 0 1 1-1z" fill="#fff" stroke="#777" stroke-width="2"/><rect x="9" y="17" width="8" height="4" fill="#777"/><rect x="5.5" y="20" width="15" height="2" fill="#777"/></svg>
<div style="left:382px;top:408.5px;width:97px;font-size:15px;line-height:17px;color:#000;text-align:right;">电脑端</div>
<svg style="left:485px;top:402px" width="31" height="31" viewBox="0 0 31 31"><path d="M23 14V1H1V23H14" fill="none" stroke="#707070" stroke-width="2"/><path d="M6 6.5h13M6 10.2h13M6 14h13M6 17.7h13" stroke="#707070" stroke-width="1.5"/><path d="M19.2 20.6L25.3 15 29.9 19.8 24 25.9z" fill="#d21c1c"/><path d="M15.2 24.9L17.6 21.8 22.8 27.3 19.8 29.9z" fill="#1473d6"/></svg>
<div style="left:481px;top:408.5px;width:97px;font-size:15px;line-height:17px;color:#000;text-align:right;">执行中</div>
<div style="left:623px;top:408px;width:16px;height:16px;background:#fff;border:1px solid #6d6d6d;"></div>
<div style="left:784px;top:408.5px;width:154px;font-size:15px;line-height:17px;color:#000;text-align:left;">HT-202011-003</div>
<div style="left:944px;top:408.5px;width:194px;font-size:15px;line-height:17px;color:#000;text-align:left;">北京明天建筑工程有限公司</div>
<div style="left:1144px;top:400.0px;width:94px;font-size:15px;line-height:17px;color:#000;text-align:left;letter-spacing:-0.8px;">BJMTJZGCYX<br>GS</div>
<div style="left:1245px;top:408.5px;width:92px;font-size:15px;line-height:17px;color:#000;text-align:left;">公司地址续费</div>
<div style="left:1345px;top:408.5px;width:92px;font-size:15px;line-height:17px;color:#000;text-align:left;"></div>
<div style="left:1441px;top:408.5px;width:157px;font-size:15px;line-height:17px;color:#000;text-align:right;letter-spacing:-0.5px;"></div>
<div style="left:1605px;top:408.5px;width:92px;font-size:15px;line-height:17px;color:#000;text-align:left;"></div>
<div style="left:1705px;top:408.5px;width:92px;font-size:15px;line-height:17px;color:#000;text-align:left;"></div>
<div style="left:382px;top:437px;width:1516px;height:41px;background:#fffee3;overflow:hidden;"></div>
<div style="left:382px;top:478px;width:1516px;height:1px;background:#a9a9a9;z-index:1;"></div>
<div style="left:481px;top:437px;width:1px;height:42px;background:#a9a9a9;z-index:1;"></div>
<div style="left:581px;top:437px;width:1px;height:42px;background:#a9a9a9;z-index:1;"></div>
<div style="left:681px;top:437px;width:1px;height:42px;background:#a9a9a9;z-index:1;"></div>
<div style="left:781px;top:437px;width:1px;height:42px;background:#a9a9a9;z-index:1;"></div>
<div style="left:941px;top:437px;width:1px;height:42px;background:#a9a9a9;z-index:1;"></div>
<div style="left:1141px;top:437px;width:1px;height:42px;background:#a9a9a9;z-index:1;"></div>
<div style="left:1241px;top:437px;width:1px;height:42px;background:#a9a9a9;z-index:1;"></div>
<div style="left:1341px;top:437px;width:1px;height:42px;background:#a9a9a9;z-index:1;"></div>
<div style="left:1441px;top:437px;width:1px;height:42px;background:#a9a9a9;z-index:1;"></div>
<div style="left:1601px;top:437px;width:1px;height:42px;background:#a9a9a9;z-index:1;"></div>
<div style="left:1701px;top:437px;width:1px;height:42px;background:#a9a9a9;z-index:1;"></div>
<div style="left:1801px;top:437px;width:1px;height:42px;background:#a9a9a9;z-index:1;"></div>
<div style="left:319px;top:439px;font-size:16px;line-height:20px;color:#000;">4</div>
<div style="left:361px;top:450px;width:16px;height:16px;background:#fff;border:1px solid #6d6d6d;"></div>
<svg style="left:387px;top:446px" width="26" height="23" viewBox="0 0 26 23"><path d="M2 1.5h22a1 1 0 0 1 1 1v14a1 1 0 0 1-1 1H2a1 1 0 0 1-1-1v-14a1 1 0 0 1 1-1z" fill="#fffee3" stroke="#777" stroke-width="2"/><rect x="9" y="17" width="8" height="4" fill="#777"/><rect x="5.5" y="20" width="15" height="2" fill="#777"/></svg>
<div style="left:382px;top:449.5px;width:97px;font-size:15px;line-height:17px;color:#000;text-align:right;">电脑端</div>
<svg style="left:488px;top:446px" width="24" height="24" viewBox="0 0 24 24"><circle cx="12" cy="12" r="11" fill="#d61f26"/><rect x="5" y="10" width="14" height="4.5" rx="1" fill="#fff"/></svg>
<div style="left:481px;top:449.5px;width:97px;font-size:15px;line-height:17px;color:#000;text-align:right;">已终止</div>
<div style="left:623px;top:450px;width:16px;height:16px;background:#fff;border:1px solid #6d6d6d;"></div>
<div style="left:784px;top:449.5px;width:154px;font-size:15px;line-height:17px;color:#000;text-align:left;">HT-202011-004</div>
<div style="left:944px;top:449.5px;width:194px;font-size:15px;line-height:17px;color:#000;text-align:left;">北京明天建筑工程有限公司</div>
<div style="left:1144px;top:441.0px;width:94px;font-size:15px;line-height:17px;color:#000;text-align:left;letter-spacing:-0.8px;">BJMTJZGCYX<br>GS</div>
<div style="left:1245px;top:449.5px;width:92px;font-size:15px;line-height:17px;color:#000;text-align:left;">公司地址续费</div>
<div style="left:1345px;top:449.5px;width:92px;font-size:15px;line-height:17px;color:#000;text-align:left;"></div>
<div style="left:1441px;top:449.5px;width:157px;font-size:15px;line-height:17px;color:#000;text-align:right;letter-spacing:-0.5px;"></div>
<div style="left:1605px;top:449.5px;width:92px;font-size:15px;line-height:17px;color:#000;text-align:left;"></div>
<div style="left:1705px;top:449.5px;width:92px;font-size:15px;line-height:17px;color:#000;text-align:left;"></div>
<div style="left:382px;top:478px;width:1516px;height:33px;background:#ffffff;overflow:hidden;"></div>
<div style="left:382px;top:511px;width:1516px;height:1px;background:#a9a9a9;z-index:1;"></div>
<div style="left:481px;top:478px;width:1px;height:34px;background:#a9a9a9;z-index:1;"></div>
<div style="left:581px;top:478px;width:1px;height:34px;background:#a9a9a9;z-index:1;"></div>
<div style="left:681px;top:478px;width:1px;height:34px;background:#a9a9a9;z-index:1;"></div>
<div style="left:781px;top:478px;width:1px;height:34px;background:#a9a9a9;z-index:1;"></div>
<div style="left:941px;top:478px;width:1px;height:34px;background:#a9a9a9;z-index:1;"></div>
<div style="left:1141px;top:478px;width:1px;height:34px;background:#a9a9a9;z-index:1;"></div>
<div style="left:1241px;top:478px;width:1px;height:34px;background:#a9a9a9;z-index:1;"></div>
<div style="left:1341px;top:478px;width:1px;height:34px;background:#a9a9a9;z-index:1;"></div>
<div style="left:1441px;top:478px;width:1px;height:34px;background:#a9a9a9;z-index:1;"></div>
<div style="left:1601px;top:478px;width:1px;height:34px;background:#a9a9a9;z-index:1;"></div>
<div style="left:1701px;top:478px;width:1px;height:34px;background:#a9a9a9;z-index:1;"></div>
<div style="left:1801px;top:478px;width:1px;height:34px;background:#a9a9a9;z-index:1;"></div>
<div style="left:319px;top:480px;font-size:16px;line-height:20px;color:#000;">5</div>
<div style="left:361px;top:486px;width:16px;height:16px;background:#fff;border:1px solid #6d6d6d;"></div>
<svg style="left:387px;top:484px" width="26" height="23" viewBox="0 0 26 23"><path d="M2 1.5h22a1 1 0 0 1 1 1v14a1 1 0 0 1-1 1H2a1 1 0 0 1-1-1v-14a1 1 0 0 1 1-1z" fill="#fff" stroke="#777" stroke-width="2"/><rect x="9" y="17" width="8" height="4" fill="#777"/><rect x="5.5" y="20" width="15" height="2" fill="#777"/></svg>
<div style="left:382px;top:486.5px;width:97px;font-size:15px;line-height:17px;color:#000;text-align:right;">电脑端</div>
<svg style="left:485px;top:480px" width="31" height="31" viewBox="0 0 31 31"><path d="M23 14V1H1V23H14" fill="none" stroke="#707070" stroke-width="2"/><path d="M6 6.5h13M6 10.2h13M6 14h13M6 17.7h13" stroke="#707070" stroke-width="1.5"/><path d="M19.2 20.6L25.3 15 29.9 19.8 24 25.9z" fill="#d21c1c"/><path d="M15.2 24.9L17.6 21.8 22.8 27.3 19.8 29.9z" fill="#1473d6"/></svg>
<div style="left:481px;top:486.5px;width:97px;font-size:15px;line-height:17px;color:#000;text-align:right;">执行中</div>
<div style="left:623px;top:486px;width:16px;height:16px;background:#fff;border:1px solid #6d6d6d;"></div>
<div style="left:784px;top:486.5px;width:154px;font-size:15px;line-height:17px;color:#000;text-align:left;">HT-202011-005</div>
<div style="left:944px;top:486.5px;width:194px;font-size:15px;line-height:17px;color:#000;text-align:left;">小浪底绿化工程</div>
<div style="left:1144px;top:486.5px;width:94px;font-size:15px;line-height:17px;color:#000;text-align:left;letter-spacing:-0.8px;">XLDLHGC</div>
<div style="left:1245px;top:486.5px;width:92px;font-size:15px;line-height:17px;color:#000;text-align:left;">怡海花园绿化</div>
<div style="left:1345px;top:486.5px;width:92px;font-size:15px;line-height:17px;color:#000;text-align:left;"></div>
<div style="left:1441px;top:486.5px;width:157px;font-size:15px;line-height:17px;color:#000;text-align:right;letter-spacing:-0.5px;">2000000</div>
<div style="left:1605px;top:486.5px;width:92px;font-size:15px;line-height:17px;color:#000;text-align:left;"></div>
<div style="left:1705px;top:486.5px;width:92px;font-size:15px;line-height:17px;color:#000;text-align:left;"></div>
<div style="left:382px;top:511px;width:1516px;height:33px;background:#fffee3;overflow:hidden;"></div>
<div style="left:382px;top:544px;width:1516px;height:1px;background:#a9a9a9;z-index:1;"></div>
<div style="left:481px;top:511px;width:1px;height:34px;background:#a9a9a9;z-index:1;"></div>
<div style="left:581px;top:511px;width:1px;height:34px;background:#a9a9a9;z-index:1;"></div>
<div style="left:681px;top:511px;width:1px;height:34px;background:#a9a9a9;z-index:1;"></div>
<div style="left:781px;top:511px;width:1px;height:34px;background:#a9a9a9;z-index:1;"></div>
<div style="left:941px;top:511px;width:1px;height:34px;background:#a9a9a9;z-index:1;"></div>
<div style="left:1141px;top:511px;width:1px;height:34px;background:#a9a9a9;z-index:1;"></div>
<div style="left:1241px;top:511px;width:1px;height:34px;background:#a9a9a9;z-index:1;"></div>
<div style="left:1341px;top:511px;width:1px;height:34px;background:#a9a9a9;z-index:1;"></div>
<div style="left:1441px;top:511px;width:1px;height:34px;background:#a9a9a9;z-index:1;"></div>
<div style="left:1601px;top:511px;width:1px;height:34px;background:#a9a9a9;z-index:1;"></div>
<div style="left:1701px;top:511px;width:1px;height:34px;background:#a9a9a9;z-index:1;"></div>
<div style="left:1801px;top:511px;width:1px;height:34px;background:#a9a9a9;z-index:1;"></div>
<div style="left:319px;top:513px;font-size:16px;line-height:20px;color:#000;">6</div>
<div style="left:361px;top:520px;width:16px;height:16px;background:#fff;border:1px solid #6d6d6d;"></div>
<svg style="left:387px;top:516px" width="26" height="23" viewBox="0 0 26 23"><path d="M2 1.5h22a1 1 0 0 1 1 1v14a1 1 0 0 1-1 1H2a1 1 0 0 1-1-1v-14a1 1 0 0 1 1-1z" fill="#fffee3" stroke="#777" stroke-width="2"/><rect x="9" y="17" width="8" height="4" fill="#777"/><rect x="5.5" y="20" width="15" height="2" fill="#777"/></svg>
<div style="left:382px;top:519.5px;width:97px;font-size:15px;line-height:17px;color:#000;text-align:right;">电脑端</div>
<svg style="left:489px;top:514px" width="22" height="27" viewBox="0 0 22 27"><path d="M11 1c1 0 1.5 0.8 1.5 1.5 4 1 5.5 4.5 5.5 9v6l4 4H0l4-4v-6c0-4.5 1.5-8 5.5-9C9.5 1.8 10 1 11 1z" fill="#fdab1b"/><rect x="0" y="20" width="22" height="2" fill="#fdab1b"/><path d="M9 24h4l-2 2z" fill="#fdab1b"/></svg>
<div style="left:481px;top:519.5px;width:97px;font-size:15px;line-height:17px;color:#000;text-align:right;">未开始</div>
<div style="left:623px;top:520px;width:16px;height:16px;background:#fff;border:1px solid #6d6d6d;"></div>
<div style="left:784px;top:519.5px;width:154px;font-size:15px;line-height:17px;color:#000;text-align:left;">HT-202011-006</div>
<div style="left:944px;top:519.5px;width:194px;font-size:15px;line-height:17px;color:#000;text-align:left;">沱沱河环境绿化工程</div>
<div style="left:1144px;top:519.5px;width:94px;font-size:15px;line-height:17px;color:#000;text-align:left;letter-spacing:-0.8px;">TTHHJLHGC</div>
<div style="left:1245px;top:519.5px;width:92px;font-size:15px;line-height:17px;color:#000;text-align:left;">怡海花园绿化</div>
<div style="left:1345px;top:519.5px;width:92px;font-size:15px;line-height:17px;color:#000;text-align:left;"></div>
<div style="left:1441px;top:519.5px;width:157px;font-size:15px;line-height:17px;color:#000;text-align:right;letter-spacing:-0.5px;">5000000</div>
<div style="left:1605px;top:519.5px;width:92px;font-size:15px;line-height:17px;color:#000;text-align:left;">人民币</div>
<div style="left:1705px;top:519.5px;width:92px;font-size:15px;line-height:17px;color:#000;text-align:left;"></div>
<div style="left:382px;top:544px;width:1516px;height:41px;background:#ffffff;overflow:hidden;"></div>
<div style="left:382px;top:585px;width:1516px;height:1px;background:#a9a9a9;z-index:1;"></div>
<div style="left:481px;top:544px;width:1px;height:42px;background:#a9a9a9;z-index:1;"></div>
<div style="left:581px;top:544px;width:1px;height:42px;background:#a9a9a9;z-index:1;"></div>
<div style="left:681px;top:544px;width:1px;height:42px;background:#a9a9a9;z-index:1;"></div>
<div style="left:781px;top:544px;width:1px;height:42px;background:#a9a9a9;z-index:1;"></div>
<div style="left:941px;top:544px;width:1px;height:42px;background:#a9a9a9;z-index:1;"></div>
<div style="left:1141px;top:544px;width:1px;height:42px;background:#a9a9a9;z-index:1;"></div>
<div style="left:1241px;top:544px;width:1px;height:42px;background:#a9a9a9;z-index:1;"></div>
<div style="left:1341px;top:544px;width:1px;height:42px;background:#a9a9a9;z-index:1;"></div>
<div style="left:1441px;top:544px;width:1px;height:42px;background:#a9a9a9;z-index:1;"></div>
<div style="left:1601px;top:544px;width:1px;height:42px;background:#a9a9a9;z-index:1;"></div>
<div style="left:1701px;top:544px;width:1px;height:42px;background:#a9a9a9;z-index:1;"></div>
<div style="left:1801px;top:544px;width:1px;height:42px;background:#a9a9a9;z-index:1;"></div>
<div style="left:319px;top:546px;font-size:16px;line-height:20px;color:#000;">7</div>
<div style="left:361px;top:556px;width:16px;height:16px;background:#fff;border:1px solid #6d6d6d;"></div>
<svg style="left:387px;top:554px" width="26" height="23" viewBox="0 0 26 23"><path d="M2 1.5h22a1 1 0 0 1 1 1v14a1 1 0 0 1-1 1H2a1 1 0 0 1-1-1v-14a1 1 0 0 1 1-1z" fill="#fff" stroke="#777" stroke-width="2"/><rect x="9" y="17" width="8" height="4" fill="#777"/><rect x="5.5" y="20" width="15" height="2" fill="#777"/></svg>
<div style="left:382px;top:556.5px;width:97px;font-size:15px;line-height:17px;color:#000;text-align:right;">电脑端</div>
<svg style="left:485px;top:550px" width="31" height="31" viewBox="0 0 31 31"><path d="M23 14V1H1V23H14" fill="none" stroke="#707070" stroke-width="2"/><path d="M6 6.5h13M6 10.2h13M6 14h13M6 17.7h13" stroke="#707070" stroke-width="1.5"/><path d="M19.2 20.6L25.3 15 29.9 19.8 24 25.9z" fill="#d21c1c"/><path d="M15.2 24.9L17.6 21.8 22.8 27.3 19.8 29.9z" fill="#1473d6"/></svg>
<div style="left:481px;top:556.5px;width:97px;font-size:15px;line-height:17px;color:#000;text-align:right;">执行中</div>
<div style="left:623px;top:556px;width:16px;height:16px;background:#fff;border:1px solid #6d6d6d;"></div>
<div style="left:784px;top:556.5px;width:154px;font-size:15px;line-height:17px;color:#000;text-align:left;">HT-202011-007</div>
<div style="left:944px;top:556.5px;width:194px;font-size:15px;line-height:17px;color:#000;text-align:left;">2015年社会掘路恢复工程</div>
<div style="left:1144px;top:548.0px;width:94px;font-size:15px;line-height:17px;color:#000;text-align:left;letter-spacing:-0.8px;">2015NSHJLHF<br>GC</div>
<div style="left:1245px;top:556.5px;width:92px;font-size:15px;line-height:17px;color:#000;text-align:left;">施工劳务合同</div>
<div style="left:1345px;top:556.5px;width:92px;font-size:15px;line-height:17px;color:#000;text-align:left;">安建翰林天筑</div>
<div style="left:1441px;top:556.5px;width:157px;font-size:15px;line-height:17px;color:#000;text-align:right;letter-spacing:-0.5px;">100000</div>
<div style="left:1605px;top:556.5px;width:92px;font-size:15px;line-height:17px;color:#000;text-align:left;">人民币</div>
<div style="left:1705px;top:556.5px;width:92px;font-size:15px;line-height:17px;color:#000;text-align:left;">转账</div>
<div style="left:382px;top:585px;width:1516px;height:41px;background:#fffee3;overflow:hidden;"></div>
<div style="left:382px;top:626px;width:1516px;height:1px;background:#a9a9a9;z-index:1;"></div>
<div style="left:481px;top:585px;width:1px;height:42px;background:#a9a9a9;z-index:1;"></div>
<div style="left:581px;top:585px;width:1px;height:42px;background:#a9a9a9;z-index:1;"></div>
<div style="left:681px;top:585px;width:1px;height:42px;background:#a9a9a9;z-index:1;"></div>
<div style="left:781px;top:585px;width:1px;height:42px;background:#a9a9a9;z-index:1;"></div>
<div style="left:941px;top:585px;width:1px;height:42px;background:#a9a9a9;z-index:1;"></div>
<div style="left:1141px;top:585px;width:1px;height:42px;background:#a9a9a9;z-index:1;"></div>
<div style="left:1241px;top:585px;width:1px;height:42px;background:#a9a9a9;z-index:1;"></div>
<div style="left:1341px;top:585px;width:1px;height:42px;background:#a9a9a9;z-index:1;"></div>
<div style="left:1441px;top:585px;width:1px;height:42px;background:#a9a9a9;z-index:1;"></div>
<div style="left:1601px;top:585px;width:1px;height:42px;background:#a9a9a9;z-index:1;"></div>
<div style="left:1701px;top:585px;width:1px;height:42px;background:#a9a9a9;z-index:1;"></div>
<div style="left:1801px;top:585px;width:1px;height:42px;background:#a9a9a9;z-index:1;"></div>
<div style="left:319px;top:587px;font-size:16px;line-height:20px;color:#000;">8</div>
<div style="left:361px;top:598px;width:16px;height:16px;background:#fff;border:1px solid #6d6d6d;"></div>
<svg style="left:387px;top:594px" width="26" height="23" viewBox="0 0 26 23"><path d="M2 1.5h22a1 1 0 0 1 1 1v14a1 1 0 0 1-1 1H2a1 1 0 0 1-1-1v-14a1 1 0 0 1 1-1z" fill="#fffee3" stroke="#777" stroke-width="2"/><rect x="9" y="17" width="8" height="4" fill="#777"/><rect x="5.5" y="20" width="15" height="2" fill="#777"/></svg>
<div style="left:382px;top:597.5px;width:97px;font-size:15px;line-height:17px;color:#000;text-align:right;">电脑端</div>
<svg style="left:485px;top:591px" width="31" height="31" viewBox="0 0 31 31"><path d="M23 14V1H1V23H14" fill="none" stroke="#707070" stroke-width="2"/><path d="M6 6.5h13M6 10.2h13M6 14h13M6 17.7h13" stroke="#707070" stroke-width="1.5"/><path d="M19.2 20.6L25.3 15 29.9 19.8 24 25.9z" fill="#d21c1c"/><path d="M15.2 24.9L17.6 21.8 22.8 27.3 19.8 29.9z" fill="#1473d6"/></svg>
<div style="left:481px;top:597.5px;width:97px;font-size:15px;line-height:17px;color:#000;text-align:right;">执行中</div>
<div style="left:623px;top:598px;width:16px;height:16px;background:#fff;border:1px solid #6d6d6d;"></div>
<div style="left:784px;top:597.5px;width:154px;font-size:15px;line-height:17px;color:#000;text-align:left;">HT-202011-008</div>
<div style="left:944px;top:597.5px;width:194px;font-size:15px;line-height:17px;color:#000;text-align:left;">2015年社会掘路恢复工程</div>
<div style="left:1144px;top:589.0px;width:94px;font-size:15px;line-height:17px;color:#000;text-align:left;letter-spacing:-0.8px;">2015NSHJLHF<br>GC</div>
<div style="left:1245px;top:597.5px;width:92px;font-size:15px;line-height:17px;color:#000;text-align:left;">施工劳务合同</div>
<div style="left:1345px;top:589.0px;width:92px;font-size:15px;line-height:17px;color:#000;text-align:left;">在建工程项目<br>施工合同</div>
<div style="left:1441px;top:597.5px;width:157px;font-size:15px;line-height:17px;color:#000;text-align:right;letter-spacing:-0.5px;"></div>
<div style="left:1605px;top:597.5px;width:92px;font-size:15px;line-height:17px;color:#000;text-align:left;">人民币</div>
<div style="left:1705px;top:597.5px;width:92px;font-size:15px;line-height:17px;color:#000;text-align:left;"></div>
<div style="left:382px;top:626px;width:1516px;height:19px;background:#ffffff;overflow:hidden;"></div>
<div style="left:481px;top:626px;width:1px;height:20px;background:#a9a9a9;z-index:1;"></div>
<div style="left:581px;top:626px;width:1px;height:20px;background:#a9a9a9;z-index:1;"></div>
<div style="left:681px;top:626px;width:1px;height:20px;background:#a9a9a9;z-index:1;"></div>
<div style="left:781px;top:626px;width:1px;height:20px;background:#a9a9a9;z-index:1;"></div>
<div style="left:941px;top:626px;width:1px;height:20px;background:#a9a9a9;z-index:1;"></div>
<div style="left:1141px;top:626px;width:1px;height:20px;background:#a9a9a9;z-index:1;"></div>
<div style="left:1241px;top:626px;width:1px;height:20px;background:#a9a9a9;z-index:1;"></div>
<div style="left:1341px;top:626px;width:1px;height:20px;background:#a9a9a9;z-index:1;"></div>
<div style="left:1441px;top:626px;width:1px;height:20px;background:#a9a9a9;z-index:1;"></div>
<div style="left:1601px;top:626px;width:1px;height:20px;background:#a9a9a9;z-index:1;"></div>
<div style="left:1701px;top:626px;width:1px;height:20px;background:#a9a9a9;z-index:1;"></div>
<div style="left:1801px;top:626px;width:1px;height:20px;background:#a9a9a9;z-index:1;"></div>
<div style="left:319px;top:628px;font-size:16px;line-height:20px;color:#000;">9</div>
<div style="left:361px;top:634px;width:16px;height:16px;background:#fff;border:1px solid #6d6d6d;"></div>
<svg style="left:387px;top:632px" width="26" height="23" viewBox="0 0 26 23"><path d="M2 1.5h22a1 1 0 0 1 1 1v14a1 1 0 0 1-1 1H2a1 1 0 0 1-1-1v-14a1 1 0 0 1 1-1z" fill="#fff" stroke="#777" stroke-width="2"/><rect x="9" y="17" width="8" height="4" fill="#777"/><rect x="5.5" y="20" width="15" height="2" fill="#777"/></svg>
<div style="left:382px;top:634.5px;width:97px;font-size:15px;line-height:17px;color:#000;text-align:right;">电脑端</div>
<svg style="left:485px;top:628px" width="31" height="31" viewBox="0 0 31 31"><path d="M23 14V1H1V23H14" fill="none" stroke="#707070" stroke-width="2"/><path d="M6 6.5h13M6 10.2h13M6 14h13M6 17.7h13" stroke="#707070" stroke-width="1.5"/><path d="M19.2 20.6L25.3 15 29.9 19.8 24 25.9z" fill="#d21c1c"/><path d="M15.2 24.9L17.6 21.8 22.8 27.3 19.8 29.9z" fill="#1473d6"/></svg>
<div style="left:481px;top:634.5px;width:97px;font-size:15px;line-height:17px;color:#000;text-align:right;">执行中</div>
<div style="left:623px;top:634px;width:16px;height:16px;background:#fff;border:1px solid #6d6d6d;"></div>
<div style="left:784px;top:634.5px;width:154px;font-size:15px;line-height:17px;color:#000;text-align:left;">HT-202011-009</div>
<div style="left:944px;top:634.5px;width:194px;font-size:15px;line-height:17px;color:#000;text-align:left;">中海国际</div>
<div style="left:1144px;top:634.5px;width:94px;font-size:15px;line-height:17px;color:#000;text-align:left;letter-spacing:-0.8px;">ZHGJ</div>
<div style="left:1245px;top:634.5px;width:92px;font-size:15px;line-height:17px;color:#000;text-align:left;">年度维护合同</div>
<div style="left:1345px;top:634.5px;width:92px;font-size:15px;line-height:17px;color:#000;text-align:left;">公路勘察设计</div>
<div style="left:1441px;top:634.5px;width:157px;font-size:15px;line-height:17px;color:#000;text-align:right;letter-spacing:-0.5px;">2348.4</div>
<div style="left:1605px;top:634.5px;width:92px;font-size:15px;line-height:17px;color:#000;text-align:left;">人民币</div>
<div style="left:1705px;top:634.5px;width:92px;font-size:15px;line-height:17px;color:#000;text-align:left;">转账</div>
<div style="left:317px;top:645px;width:1581px;height:2px;background:#a0a0a0;"></div>
<div style="left:317px;top:647px;width:1581px;height:29px;background:#fff;"></div>
<div style="left:317px;top:647px;width:65px;height:29px;background:#f0f0f0;"></div>
<div style="left:382px;top:647px;width:1px;height:29px;background:#dcdcdc;"></div>
<div style="left:384px;top:648px;width:97px;height:26px;background:#e6e9eb;border:1px solid #dde0e3;"></div>
<div style="left:384px;top:652px;font-size:15px;line-height:18px;height:18px;color:#000;width:94px;text-align:right;font-weight:bold;">合计</div>
<div style="left:683px;top:648px;width:98px;height:26px;background:#e6e9eb;border:1px solid #dde0e3;"></div>
<div style="left:1443px;top:648px;width:158px;height:26px;background:#e6e9eb;border:1px solid #dde0e3;"></div>
<div style="left:1443px;top:652px;font-size:15px;line-height:18px;height:18px;color:#000;width:156.5px;text-align:right;font-weight:bold;letter-spacing:1.5px;">13448624.3251</div>
<div style="left:317px;top:675px;width:1581px;height:1px;background:#d8d8d8;"></div>
<div style="left:317px;top:676px;width:1581px;height:21px;background:#f0f0f0;"></div>
<svg style="left:323px;top:681px" width="8" height="11" viewBox="0 0 8 11"><path d="M6.5 1L2 5.5 6.5 10" stroke="#606060" stroke-width="2" fill="none"/></svg>
<div style="left:338px;top:677px;width:864px;height:19px;background:#cdcdcd;"></div>
<svg style="left:1884px;top:681px" width="8" height="11" viewBox="0 0 8 11"><path d="M1.5 1L6 5.5 1.5 10" stroke="#606060" stroke-width="2" fill="none"/></svg>
<div style="left:1898px;top:297px;width:20px;height:400px;background:#f0f0f0;"></div>
<svg style="left:1902px;top:303px" width="12" height="8" viewBox="0 0 12 8"><path d="M1 6.5L6 1.5 11 6.5" stroke="#606060" stroke-width="2" fill="none"/></svg>
<div style="left:1899px;top:318px;width:18px;height:90px;background:#cdcdcd;"></div>
<svg style="left:1902px;top:660px" width="12" height="8" viewBox="0 0 12 8"><path d="M1 1.5L6 6.5 11 1.5" stroke="#606060" stroke-width="2" fill="none"/></svg>
<div style="left:316px;top:727px;width:1602px;height:229px;background:#fff;border:1px solid #a0a0a0;"></div>
<div style="left:317px;top:702px;width:59px;height:26px;background:#fff;border:1px solid #a0a0a0;border-bottom:none;z-index:2;"></div>
<div style="left:317px;top:706px;font-size:15px;line-height:18px;height:18px;color:#000;width:59px;text-align:center;z-index:3;">收款单</div>
<div style="left:376px;top:705px;width:70px;height:23px;background:#e3e3e3;border:1px solid #a9a9a9;border-bottom:none;"></div>
<div style="left:376px;top:707px;font-size:15px;line-height:18px;height:18px;color:#000;width:70px;text-align:center;">收款发票</div>
<div style="left:446px;top:705px;width:58px;height:23px;background:#e3e3e3;border:1px solid #a9a9a9;border-bottom:none;"></div>
<div style="left:446px;top:707px;font-size:15px;line-height:18px;height:18px;color:#000;width:58px;text-align:center;">付款单</div>
<div style="left:504px;top:705px;width:72px;height:23px;background:#e3e3e3;border:1px solid #a9a9a9;border-bottom:none;"></div>
<div style="left:504px;top:707px;font-size:15px;line-height:18px;height:18px;color:#000;width:72px;text-align:center;">付款发票</div>
<div style="left:576px;top:705px;width:102px;height:23px;background:#e3e3e3;border:1px solid #a9a9a9;border-bottom:none;"></div>
<div style="left:576px;top:707px;font-size:15px;line-height:18px;height:18px;color:#000;width:102px;text-align:center;">合同执行情况</div>
<div style="left:678px;top:705px;width:117px;height:23px;background:#e3e3e3;border:1px solid #a9a9a9;border-bottom:none;"></div>
<div style="left:678px;top:707px;font-size:15px;line-height:18px;height:18px;color:#000;width:117px;text-align:center;">合同自定义提醒</div>
<div style="left:795px;top:705px;width:100px;height:23px;background:#e3e3e3;border:1px solid #a9a9a9;border-bottom:none;"></div>
<div style="left:795px;top:707px;font-size:15px;line-height:18px;height:18px;color:#000;width:100px;text-align:center;">合同产品明细</div>
<div style="left:320px;top:731px;width:1595px;height:26px;background:linear-gradient(#fdfdfe,#f7f9fc);border-bottom:1px solid #dfe8f6;"></div>
<div style="left:320px;top:731px;width:44px;height:26px;background:#f0f0f0;"></div>
<div style="left:322px;top:732px;font-size:15px;line-height:18px;height:18px;color:#000;">序号</div>
<div style="left:366px;top:735px;font-size:15px;line-height:18px;height:18px;color:#000;width:99px;text-align:center;">来源</div>
<div style="left:463px;top:731px;width:1px;height:26px;background:#dde7f5;"></div>
<div style="left:465px;top:735px;font-size:15px;line-height:18px;height:18px;color:#000;width:180px;text-align:center;">收款单号</div>
<div style="left:643px;top:731px;width:1px;height:26px;background:#dde7f5;"></div>
<div style="left:645px;top:735px;font-size:15px;line-height:18px;height:18px;color:#000;width:100px;text-align:center;">收款日期</div>
<div style="left:743px;top:731px;width:1px;height:26px;background:#dde7f5;"></div>
<div style="left:745px;top:735px;font-size:15px;line-height:18px;height:18px;color:#000;width:100px;text-align:center;">收款人</div>
<div style="left:843px;top:731px;width:1px;height:26px;background:#dde7f5;"></div>
<div style="left:845px;top:735px;font-size:15px;line-height:18px;height:18px;color:#000;width:100px;text-align:center;">收款金额</div>
<div style="left:943px;top:731px;width:1px;height:26px;background:#dde7f5;"></div>
<div style="left:945px;top:735px;font-size:15px;line-height:18px;height:18px;color:#000;width:100px;text-align:center;">收款币种</div>
<div style="left:1043px;top:731px;width:1px;height:26px;background:#dde7f5;"></div>
<div style="left:1045px;top:735px;font-size:15px;line-height:18px;height:18px;color:#000;width:100px;text-align:center;">收款方式</div>
<div style="left:1143px;top:731px;width:1px;height:26px;background:#dde7f5;"></div>
<div style="left:1145px;top:735px;font-size:15px;line-height:18px;height:18px;color:#000;width:180px;text-align:center;">关联开票单号</div>
<div style="left:1323px;top:731px;width:1px;height:26px;background:#dde7f5;"></div>
<div style="left:1325px;top:735px;font-size:15px;line-height:18px;height:18px;color:#000;width:100px;text-align:center;">关联发票金额</div>
<div style="left:1423px;top:731px;width:1px;height:26px;background:#dde7f5;"></div>
<div style="left:1425px;top:735px;font-size:15px;line-height:18px;height:18px;color:#000;width:200px;text-align:center;">关联发票号码</div>
<div style="left:1623px;top:731px;width:1px;height:26px;background:#dde7f5;"></div>
<div style="left:1625px;top:735px;font-size:15px;line-height:18px;height:18px;color:#000;width:100px;text-align:center;">凭证号</div>
<div style="left:1723px;top:731px;width:1px;height:26px;background:#dde7f5;"></div>
<div style="left:1725px;top:735px;font-size:15px;line-height:18px;height:18px;color:#000;width:202px;text-align:center;">说明</div>
<div style="left:1036px;top:820px;font-size:14px;line-height:18px;height:18px;color:#555;letter-spacing:0.75px;">提示：当前没有可显示的数据！</div>
<div style="left:320px;top:901px;width:1595px;height:2px;background:#a0a0a0;"></div>
<div style="left:320px;top:903px;width:44px;height:28px;background:#f0f0f0;"></div>
<div style="left:364px;top:903px;width:1px;height:28px;background:#dcdcdc;"></div>
<div style="left:366px;top:904px;width:97px;height:25px;background:#e6e9eb;border:1px solid #dde0e3;"></div>
<div style="left:366px;top:907px;font-size:15px;line-height:18px;height:18px;color:#000;width:94px;text-align:right;font-weight:bold;">合计</div>
<div style="left:845px;top:904px;width:98px;height:25px;background:#e6e9eb;border:1px solid #dde0e3;"></div>
<div style="left:320px;top:931px;width:1595px;height:1px;background:#d8d8d8;"></div>
<div style="left:320px;top:932px;width:1595px;height:21px;background:#f0f0f0;"></div>
<svg style="left:325px;top:937px" width="8" height="11" viewBox="0 0 8 11"><path d="M6.5 1L2 5.5 6.5 10" stroke="#606060" stroke-width="2" fill="none"/></svg>
<div style="left:341px;top:933px;width:1176px;height:19px;background:#cdcdcd;"></div>
<svg style="left:1900px;top:937px" width="8" height="11" viewBox="0 0 8 11"><path d="M1.5 1L6 5.5 1.5 10" stroke="#606060" stroke-width="2" fill="none"/></svg>
<div style="left:316px;top:957px;width:1302px;height:1px;background:#dadada;"></div>
<div style="left:318px;top:962px;font-size:15px;line-height:18px;height:18px;color:#000;">总记录：139</div>
<div style="left:451px;top:962px;font-size:15px;line-height:18px;height:18px;color:#000;">总页数：5</div>
<div style="left:582px;top:962px;font-size:15px;line-height:18px;height:18px;color:#000;">当前页：1</div>
<div style="left:1641px;top:961px;font-size:15px;line-height:18px;height:18px;color:#777;">首页</div>
<div style="left:1690px;top:961px;font-size:15px;line-height:18px;height:18px;color:#777;">上一页</div>
<div style="left:1747px;top:961px;font-size:15px;line-height:18px;height:18px;color:#0000ff;">下一页</div>
<div style="left:1811px;top:961px;font-size:15px;line-height:18px;height:18px;color:#0000ff;">尾页</div>
<div style="left:1866px;top:961px;font-size:15px;line-height:18px;height:18px;color:#0000ff;">全部</div>
<div style="left:0px;top:983px;width:1920px;height:25px;background:#fff;"></div>
<div style="left:2px;top:985px;width:74px;height:24px;background:#f0f0f0;border:1px solid #a9a9a9;border-bottom:none;"></div>
<div style="left:10px;top:988px;font-size:15px;line-height:18px;height:18px;color:#000;">导航窗口</div>
<div style="left:75px;top:983px;width:100px;height:26px;background:#fff;border:1px solid #a9a9a9;border-bottom:none;"></div>
<div style="left:85px;top:987px;font-size:15px;line-height:18px;height:18px;color:#000;">合同目录</div>
<div style="left:154px;top:989px;width:14px;height:14px;background:#d24b4b;"></div>
<svg style="left:157px;top:992px" width="8" height="8" viewBox="0 0 8 8"><path d="M1 1L7 7M7 1L1 7" stroke="#fff" stroke-width="1.8"/></svg>
<div style="left:0px;top:1008px;width:1920px;height:1px;background:#6a8ec4;"></div>
<div style="left:0px;top:1009px;width:1920px;height:24px;background:linear-gradient(#f6faff 0px,#f6faff 1px,#d8e6f8 1.5px,#cadcf4 7px,#b5cef0 9px,#bcd3f1 13px,#d2e3f9 20px,#dcebfc 22px,#dcebfc 23px,#a9b3be 23.5px);"></div>
<div style="left:196px;top:1009px;width:1px;height:24px;background:#8aa8d4;"></div>
<div style="left:197px;top:1009px;width:1px;height:24px;background:#f4f8fd;"></div>
<div style="left:782px;top:1009px;width:1px;height:24px;background:#8aa8d4;"></div>
<div style="left:783px;top:1009px;width:1px;height:24px;background:#f4f8fd;"></div>
<div style="left:1368px;top:1009px;width:1px;height:24px;background:#8aa8d4;"></div>
<div style="left:1369px;top:1009px;width:1px;height:24px;background:#f4f8fd;"></div>
<div style="left:1663px;top:1009px;width:1px;height:24px;background:#8aa8d4;"></div>
<div style="left:1664px;top:1009px;width:1px;height:24px;background:#f4f8fd;"></div>
<div style="left:3px;top:1012px;font-size:15px;line-height:18px;height:18px;color:#1f3d84;">就绪</div>
<div style="left:200px;top:1012px;font-size:15px;line-height:18px;height:18px;color:#1f3d84;">安装目录：F:\优图软件\优图软件7.1\客户端</div>
<div style="left:787px;top:1012px;font-size:15px;line-height:18px;height:18px;color:#1f3d84;">今天是：2020-11-05 星期四 庚子(鼠)年九月二十</div>
<div style="left:1373px;top:1012px;font-size:15px;line-height:18px;height:18px;color:#1f3d84;">第一账套</div>
<div style="left:1667px;top:1012px;font-size:15px;line-height:18px;height:18px;color:#1f3d84;">管理员(管理员权限)</div>
<div style="left:0px;top:1033px;width:1920px;height:8px;background:#6b7c93;"></div>
<div style="left:284px;top:1033px;width:61px;height:8px;background:#8595ab;border:1px solid #a3b1c4;border-bottom:none;"></div>
<div style="left:430px;top:1033px;width:69px;height:8px;background:#8595ab;border:1px solid #a3b1c4;border-bottom:none;"></div>
<div style="left:576px;top:1033px;width:69px;height:8px;background:#8595ab;border:1px solid #a3b1c4;border-bottom:none;"></div>
<div style="left:649px;top:1033px;width:66px;height:8px;background:#8595ab;border:1px solid #a3b1c4;border-bottom:none;"></div>
<div style="left:721px;top:1033px;width:69px;height:8px;background:#8595ab;border:1px solid #a3b1c4;border-bottom:none;"></div>
<div style="left:795px;top:1033px;width:68px;height:8px;background:#8595ab;border:1px solid #a3b1c4;border-bottom:none;"></div>
<div style="left:867px;top:1033px;width:68px;height:8px;background:#8595ab;border:1px solid #a3b1c4;border-bottom:none;"></div>
<div style="left:1013px;top:1033px;width:70px;height:8px;background:#8595ab;border:1px solid #a3b1c4;border-bottom:none;"></div>
<div style="left:1087px;top:1033px;width:69px;height:8px;background:#9cabbf;border:1px solid #a3b1c4;border-bottom:none;"></div>
<div style="left:1160px;top:1033px;width:69px;height:8px;background:#8595ab;border:1px solid #a3b1c4;border-bottom:none;"></div>
<div style="left:590px;top:1036px;width:40px;height:5px;background:#0a8ad8;"></div>
<div style="left:1028px;top:1036px;width:40px;height:5px;background:#0a8ad8;"></div>
<div style="left:1101px;top:1036px;width:40px;height:5px;background:#0a8ad8;"></div>
<div style="left:1174px;top:1036px;width:40px;height:5px;background:#6a3ad8;"></div>
<div style="left:667px;top:1036px;width:26px;height:5px;background:#d02020;border-radius:13px 13px 0 0;"></div>
<div style="left:297px;top:1037px;width:33px;height:4px;background:#e8c060;"></div>
<div style="left:22px;top:1038px;width:24px;height:3px;background:#dfe6ee;"></div>
<div style="left:82px;top:1037px;width:13px;height:4px;background:#b8d040;border-radius:7px 7px 0 0;"></div>
<div style="left:99px;top:1037px;width:11px;height:4px;background:#3a9ae0;border-radius:6px 6px 0 0;"></div>
<div style="left:156px;top:1036px;width:30px;height:5px;background:linear-gradient(90deg,#2040c0,#e8eef8);"></div>
<div style="left:226px;top:1038px;width:19px;height:3px;background:#e8e8e8;"></div>
<div style="left:382px;top:1037px;width:23px;height:4px;background:#e8f0e0;border-radius:8px 8px 0 0;"></div>
<div style="left:450px;top:1036px;width:25px;height:5px;background:#1a8ae0;border-radius:12px 12px 0 0;"></div>
<div style="left:517px;top:1037px;width:32px;height:4px;background:#e6e6e6;"></div>
<div style="left:741px;top:1037px;width:20px;height:4px;background:#e0e0e0;"></div>
<div style="left:814px;top:1037px;width:21px;height:4px;background:#e0e0e0;"></div>
<div style="left:890px;top:1038px;width:15px;height:3px;background:#b0b8b0;"></div>
<div style="left:960px;top:1037px;width:17px;height:4px;background:#1a2030;"></div></body></html>
